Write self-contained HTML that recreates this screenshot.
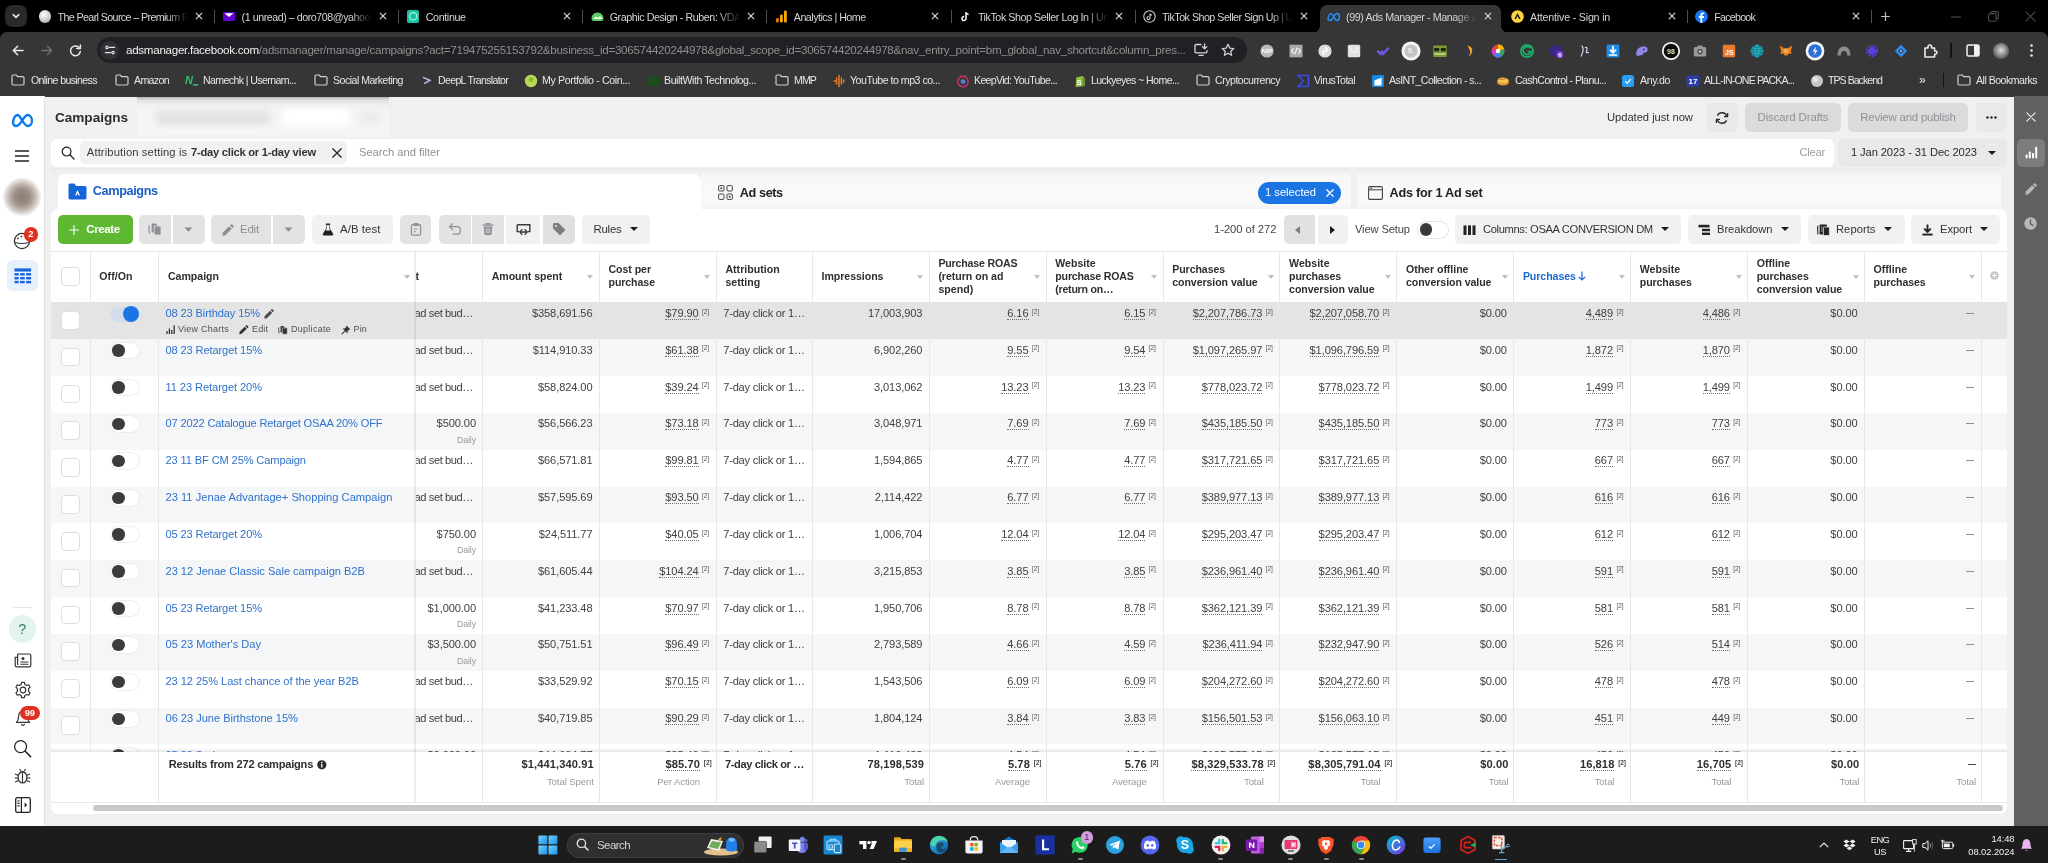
<!DOCTYPE html>
<html lang="en"><head><meta charset="utf-8"><title>Ads Manager</title>
<style>
*{box-sizing:border-box;margin:0;padding:0}
html,body{width:2048px;height:863px;overflow:hidden;background:#f0f0f1}
body{opacity:0.9999;position:relative;font-family:"Liberation Sans",sans-serif;font-size:11.2px;color:#333;-webkit-font-smoothing:antialiased}
.abs{position:absolute}
svg{display:block;overflow:visible}
/* ---------- chrome ---------- */
#tabstrip{position:absolute;left:0;top:0;width:2048px;height:42px;background:#000}
#toolbar{position:absolute;left:0;top:32px;width:2048px;height:64.7px;background:#363637;border-radius:7px 7px 0 0}
.tab{position:absolute;top:0;height:32px;color:#d6d6d6;font-size:10.7px;letter-spacing:-0.1px}
.tab .fav{position:absolute;left:0;top:8px;width:16px;height:16px;border-radius:50%}
.tab .tt{position:absolute;left:13px;top:9.6px;width:130px;height:16px;white-space:nowrap;overflow:hidden;line-height:14px;
 -webkit-mask-image:linear-gradient(90deg,#000 0,#000 108px,transparent 130px);mask-image:linear-gradient(90deg,#000 0,#000 108px,transparent 130px)}
.tab .x{position:absolute;left:149px;top:11px}
.tsep{position:absolute;top:10px;width:1px;height:13px;background:#505050}
#urlpill{position:absolute;left:97px;top:5px;width:1150px;height:26px;border-radius:13px;background:#202124}
.url{position:absolute;left:29px;top:6px;font-size:11.6px;line-height:14px;white-space:nowrap;color:#8f8f8f;letter-spacing:-0.02px}
.url b{font-weight:normal;color:#f0f0f0}
.bm{position:absolute;top:41px;height:14px;line-height:14px;font-size:10.6px;color:#e6e6e6;white-space:nowrap;letter-spacing:-0.2px}
.ext{position:absolute;top:9px;width:17px;height:17px;border-radius:50%}
/* ---------- page ---------- */
#leftnav{position:absolute;left:0;top:96px;width:45px;height:730px;background:#fff;border-right:1px solid #e2e2e3}
#rightbar{position:absolute;left:2013.5px;top:96px;width:34.5px;height:730px;background:#606060}
.btn{position:absolute;height:28.5px;border-radius:5px;background:#e3e3e4;color:#8d8d8f;font-size:11.4px;line-height:28.5px;white-space:nowrap}
.btn.lt{background:#f1f1f2;color:#333}
.card{position:absolute;background:#fff}
/* table */
.hdr{position:absolute;top:250.5px;height:51.3px;font-weight:bold;font-size:10.6px;line-height:12.9px;color:#2f2f2f;letter-spacing:-0.2px;display:flex;align-items:center;padding-left:9.2px;white-space:nowrap}
.hdr .car{position:absolute;right:5.9px;top:24.6px;width:0;height:0;border-left:3.6px solid transparent;border-right:3.6px solid transparent;border-top:4px solid #bdbfc2}
.vline{position:absolute;top:250.5px;width:1px;height:552px;background:#e6e7e9}
.row{position:absolute;left:51px;width:1956px;height:36.8px}
.cell{position:absolute;top:4.5px;height:13px;line-height:13px;white-space:nowrap;font-size:11.1px;letter-spacing:-0.1px;color:#414141}
.cell.r{text-align:right}
.cell.u{}
.u span.v{border-bottom:1px dotted #6f6f6f;padding-bottom:0}
.sup{display:inline-block;font-size:5.5px;letter-spacing:0;vertical-align:top;margin-left:3px;line-height:8px;color:#555;position:relative;top:0px}
.sub{position:absolute;top:22.1px;height:11px;line-height:11px;font-size:8.8px;color:#9a9a9a;white-space:nowrap;text-align:right;letter-spacing:-0.1px}
.name{position:absolute;top:4.5px;left:114.5px;height:13px;line-height:13px;font-size:11.1px;color:#3072cc;white-space:nowrap;letter-spacing:-0.12px}
.chk{position:absolute;left:10.3px;top:8.6px;width:18.6px;height:18.6px;border:1px solid #dcdee1;border-radius:4px;background:#fff}
.tog{position:absolute;left:59.8px;top:3.6px;width:28.2px;height:15.4px;border-radius:8px;background:#fff;box-shadow:0 0 0 0.8px #e6e8ea}
.tog i{position:absolute;left:1.4px;top:1.5px;width:12.4px;height:12.4px;border-radius:50%;background:#3c3c3c}
.foot{position:absolute;font-weight:bold;font-size:11.1px;color:#2f2f2f;white-space:nowrap;text-align:right;height:13px;line-height:13px;top:758px;letter-spacing:0.1px}
.foot2{position:absolute;font-size:9.6px;color:#9a9a9a;white-space:nowrap;text-align:right;height:11px;line-height:11px;top:775.5px;letter-spacing:-0.1px}
/* taskbar */
#taskbar{position:absolute;left:0;top:826px;width:2048px;height:37px;background:#1c1c1c}
.tbi{position:absolute;top:8px;width:20px;height:20px;border-radius:4px}
.supb{position:absolute;top:5.2px;width:7.4px;height:8px;font-size:6.5px;line-height:8px;color:#555;text-align:center;letter-spacing:-0.1px;margin-right:-0.5px}

</style></head>
<body>
<div id="tabstrip">
<div class="abs" style="left:5px;top:5px;width:22px;height:22px;border-radius:7px;background:#2a2a2a"><svg width="22" height="22" viewBox="0 0 22 22"><path d="M8.2 9.6 L11 12.4 L13.8 9.6" fill="none" stroke="#e8e8e8" stroke-width="1.5" stroke-linecap="round" stroke-linejoin="round"/></svg></div>
<div class="abs" style="left:1320px;top:5px;width:181px;height:28px;background:#363637;border-radius:7px 7px 0 0"></div>
<div class="abs" style="left:1313px;top:26px;width:7px;height:7px;background:radial-gradient(circle at 0 0,transparent 6.5px,#363637 7px)"></div>
<div class="abs" style="left:1501px;top:26px;width:7px;height:7px;background:radial-gradient(circle at 100% 0,transparent 6.5px,#363637 7px)"></div>
<div class="tab" style="left:38.5px;width:176px"><div class="abs" style="left:0;top:10px;width:13px;height:13px"><div style="width:12.5px;height:12.5px;border-radius:50%;background:radial-gradient(circle at 40% 35%,#fff 0,#d9d4d0 45%,#9a9490 100%)"></div></div><div class="tt" style="left:19px;letter-spacing:-0.61px">The Pearl Source – Premium P</div><svg class="x" style="left:156.6px;top:12.4px" width="8" height="8" viewBox="0 0 8 8"><path d="M1.2 1.2 L6.8 6.8 M6.8 1.2 L1.2 6.8" stroke="#dcdcdc" stroke-width="1.15" stroke-linecap="round"/></svg></div>
<div class="tsep" style="left:214.2px"></div>
<div class="tab" style="left:222.6px;width:176px"><div class="abs" style="left:0;top:10px;width:13px;height:13px"><div style="width:12px;height:9px;margin-top:2px;background:#6001d2;border-radius:1px;position:relative"><svg width="12" height="9" viewBox="0 0 12 9"><path d="M1.5 1.2 L6 5 L10.5 1.2 Z" fill="#fff"/></svg></div></div><div class="tt" style="left:19px;letter-spacing:-0.46px">(1 unread) – doro708@yahoo.</div><svg class="x" style="left:156.6px;top:12.4px" width="8" height="8" viewBox="0 0 8 8"><path d="M1.2 1.2 L6.8 6.8 M6.8 1.2 L1.2 6.8" stroke="#dcdcdc" stroke-width="1.15" stroke-linecap="round"/></svg></div>
<div class="tsep" style="left:398.3px"></div>
<div class="tab" style="left:406.7px;width:176px"><div class="abs" style="left:0;top:10px;width:13px;height:13px"><div style="width:12.5px;height:12.5px;border-radius:2px;background:#19c3a0"><svg width="12.5" height="12.5" viewBox="0 0 12 12"><circle cx="6" cy="6" r="3.6" fill="none" stroke="#aef0e0" stroke-width="1.2"/></svg></div></div><div class="tt" style="left:19px;letter-spacing:-0.35px">Continue</div><svg class="x" style="left:156.6px;top:12.4px" width="8" height="8" viewBox="0 0 8 8"><path d="M1.2 1.2 L6.8 6.8 M6.8 1.2 L1.2 6.8" stroke="#dcdcdc" stroke-width="1.15" stroke-linecap="round"/></svg></div>
<div class="tsep" style="left:582.4px"></div>
<div class="tab" style="left:590.7px;width:176px"><div class="abs" style="left:0;top:10px;width:13px;height:13px"><svg width="13" height="13" viewBox="0 0 13 13"><path d="M0.5 9 Q0.5 3 6.5 2.5 Q12.5 3 12.5 9 Q12.5 11 10 11 H3 Q0.5 11 0.5 9Z" fill="#5ecc62"/><path d="M2 9 L5 6.5 L7 8 L9 6 L11.5 9 Z" fill="#fff"/></svg></div><div class="tt" style="left:19px;letter-spacing:-0.43px">Graphic Design - Ruben: VDA</div><svg class="x" style="left:156.6px;top:12.4px" width="8" height="8" viewBox="0 0 8 8"><path d="M1.2 1.2 L6.8 6.8 M6.8 1.2 L1.2 6.8" stroke="#dcdcdc" stroke-width="1.15" stroke-linecap="round"/></svg></div>
<div class="tsep" style="left:766.4px"></div>
<div class="tab" style="left:774.8px;width:176px"><div class="abs" style="left:0;top:10px;width:13px;height:13px"><svg width="13" height="13" viewBox="0 0 13 13"><rect x="1" y="8" width="2.8" height="4.5" rx="1.2" fill="#e37400"/><rect x="5" y="4.5" width="2.8" height="8" rx="1.2" fill="#f9ab00"/><rect x="9" y="0.5" width="2.8" height="12" rx="1.2" fill="#f9ab00"/></svg></div><div class="tt" style="left:19px;letter-spacing:-0.51px">Analytics | Home</div><svg class="x" style="left:156.6px;top:12.4px" width="8" height="8" viewBox="0 0 8 8"><path d="M1.2 1.2 L6.8 6.8 M6.8 1.2 L1.2 6.8" stroke="#dcdcdc" stroke-width="1.15" stroke-linecap="round"/></svg></div>
<div class="tsep" style="left:950.5px"></div>
<div class="tab" style="left:958.9px;width:176px"><div class="abs" style="left:0;top:10px;width:13px;height:13px"><svg width="13" height="13" viewBox="0 0 13 13"><path d="M7 2.2 V8.6 A2 2 0 1 1 5.2 6.6 M7 2.2 Q7.4 4.2 9.6 4.5" fill="none" stroke="#fff" stroke-width="1.5"/></svg></div><div class="tt" style="left:19px;letter-spacing:-0.43px">TikTok Shop Seller Log In | Un</div><svg class="x" style="left:156.6px;top:12.4px" width="8" height="8" viewBox="0 0 8 8"><path d="M1.2 1.2 L6.8 6.8 M6.8 1.2 L1.2 6.8" stroke="#dcdcdc" stroke-width="1.15" stroke-linecap="round"/></svg></div>
<div class="tsep" style="left:1134.6px"></div>
<div class="tab" style="left:1143.0px;width:176px"><div class="abs" style="left:0;top:10px;width:13px;height:13px"><svg width="13" height="13" viewBox="0 0 13 13"><circle cx="6.5" cy="6.5" r="5.7" fill="none" stroke="#cfcfcf" stroke-width="1.1"/><path d="M7 3.5 V8 A1.5 1.5 0 1 1 5.6 6.6 M7 3.5 Q7.3 5 9 5.2" fill="none" stroke="#cfcfcf" stroke-width="1.1"/></svg></div><div class="tt" style="left:19px;letter-spacing:-0.51px">TikTok Shop Seller Sign Up | U</div><svg class="x" style="left:156.6px;top:12.4px" width="8" height="8" viewBox="0 0 8 8"><path d="M1.2 1.2 L6.8 6.8 M6.8 1.2 L1.2 6.8" stroke="#dcdcdc" stroke-width="1.15" stroke-linecap="round"/></svg></div>
<div class="tab" style="left:1327.1px;width:176px"><div class="abs" style="left:0;top:10px;width:13px;height:13px"><svg width="13.5" height="12" viewBox="0 0 15 13" style="margin-top:0.5px"><path d="M1.2 9.5 C1.2 5 3 2.6 4.6 2.6 C6.4 2.6 8.6 10.4 10.8 10.4 C12.6 10.4 13.8 8.6 13.8 6.6 C13.8 4.4 12.4 2.6 10.6 2.6 C8.6 2.6 6.2 10.4 3.6 10.4 C2.2 10.4 1.2 9.6 1.2 8.2" fill="none" stroke="#2b8cf5" stroke-width="1.7" stroke-linecap="round"/></svg></div><div class="tt" style="left:19px;letter-spacing:-0.41px">(99) Ads Manager - Manage a</div><svg class="x" style="left:156.6px;top:12.4px" width="8" height="8" viewBox="0 0 8 8"><path d="M1.2 1.2 L6.8 6.8 M6.8 1.2 L1.2 6.8" stroke="#dcdcdc" stroke-width="1.15" stroke-linecap="round"/></svg></div>
<div class="tab" style="left:1511.1px;width:176px"><div class="abs" style="left:0;top:10px;width:13px;height:13px"><svg width="13" height="13" viewBox="0 0 13 13"><circle cx="6.5" cy="6.5" r="6.3" fill="#ffd23f"/><path d="M6.5 3 L9.6 9 H8 L6.5 6 L5 9 H3.4 Z" fill="#1a1a1a"/></svg></div><div class="tt" style="left:19px;letter-spacing:-0.20px">Attentive - Sign in</div><svg class="x" style="left:156.6px;top:12.4px" width="8" height="8" viewBox="0 0 8 8"><path d="M1.2 1.2 L6.8 6.8 M6.8 1.2 L1.2 6.8" stroke="#dcdcdc" stroke-width="1.15" stroke-linecap="round"/></svg></div>
<div class="tsep" style="left:1686.8px"></div>
<div class="tab" style="left:1695.2px;width:176px"><div class="abs" style="left:0;top:10px;width:13px;height:13px"><svg width="13" height="13" viewBox="0 0 13 13"><circle cx="6.5" cy="6.5" r="6.4" fill="#1877f2"/><path d="M7.2 12.8 V8 H8.8 L9.1 6.1 H7.2 V5 Q7.2 4.1 8.2 4.1 H9.2 V2.5 Q8.4 2.4 7.7 2.4 Q5.4 2.4 5.4 4.8 V6.1 H3.8 V8 H5.4 V12.8Z" fill="#fff"/></svg></div><div class="tt" style="left:19px;letter-spacing:-0.75px">Facebook</div><svg class="x" style="left:156.6px;top:12.4px" width="8" height="8" viewBox="0 0 8 8"><path d="M1.2 1.2 L6.8 6.8 M6.8 1.2 L1.2 6.8" stroke="#dcdcdc" stroke-width="1.15" stroke-linecap="round"/></svg></div>
<div class="tsep" style="left:1871px"></div>
<svg class="abs" style="left:1880.5px;top:12px" width="9" height="9" viewBox="0 0 9 9"><path d="M4.5 0.6 V8.4 M0.6 4.5 H8.4" stroke="#c2c2c2" stroke-width="1.2" stroke-linecap="round"/></svg>
<svg class="abs" style="left:1951px;top:16px" width="10" height="2" viewBox="0 0 10 2"><path d="M0 1 H10" stroke="#4c4c4c" stroke-width="1.1"/></svg>
<svg class="abs" style="left:1988px;top:11px" width="11" height="11" viewBox="0 0 11 11"><rect x="0.6" y="2.6" width="7.6" height="7.6" rx="1.5" fill="none" stroke="#4c4c4c" stroke-width="1.1"/><path d="M2.8 2.4 V1.8 Q2.8 0.6 4 0.6 H9 Q10.3 0.6 10.3 1.8 V6.8 Q10.3 8 9.2 8 H8.6" fill="none" stroke="#4c4c4c" stroke-width="1.1"/></svg>
<svg class="abs" style="left:2025px;top:11px" width="11" height="11" viewBox="0 0 11 11"><path d="M0.6 0.6 L10.4 10.4 M10.4 0.6 L0.6 10.4" stroke="#4c4c4c" stroke-width="1.1"/></svg>
</div>
<div id="toolbar">
<svg class="abs" style="left:12px;top:12.5px" width="12" height="11" viewBox="0 0 12 11"><path d="M11 5.5 H1.5 M5.6 1.2 L1.3 5.5 L5.6 9.8" fill="none" stroke="#eaeaea" stroke-width="1.5" stroke-linecap="round" stroke-linejoin="round"/></svg>
<svg class="abs" style="left:40.5px;top:12.5px" width="12" height="11" viewBox="0 0 12 11"><path d="M1 5.5 H10.5 M6.4 1.2 L10.7 5.5 L6.4 9.8" fill="none" stroke="#6e6e6e" stroke-width="1.4" stroke-linecap="round" stroke-linejoin="round"/></svg>
<svg class="abs" style="left:69px;top:11.5px" width="13" height="13" viewBox="0 0 13 13"><path d="M10.6 4.2 A4.9 4.9 0 1 0 11.3 7.4" fill="none" stroke="#eaeaea" stroke-width="1.5" stroke-linecap="round"/><path d="M11.4 1 V4.6 H7.8" fill="none" stroke="#eaeaea" stroke-width="1.5" stroke-linecap="round" stroke-linejoin="round"/></svg>
<div id="urlpill"><div class="abs" style="left:3px;top:3.5px;width:19px;height:19px;border-radius:50%;background:#2f3033"></div><svg class="abs" style="left:7.5px;top:8px" width="10" height="10" viewBox="0 0 10 10"><circle cx="2" cy="2.4" r="1.25" fill="none" stroke="#e8e8e8" stroke-width="1.1"/><path d="M4.6 2.4 H9.6" stroke="#e8e8e8" stroke-width="1.2" stroke-linecap="round"/><circle cx="8" cy="7.6" r="1.25" fill="none" stroke="#e8e8e8" stroke-width="1.1"/><path d="M0.4 7.6 H5.4" stroke="#e8e8e8" stroke-width="1.2" stroke-linecap="round"/></svg><div class="url" style="letter-spacing:-0.280px"><b>adsmanager.facebook.com</b>/adsmanager/manage/campaigns?act=719475255153792&amp;business_id=306574420244978&amp;global_scope_id=306574420244978&amp;nav_entry_point=bm_global_nav_shortcut&amp;column_pres...</div><svg class="abs" style="left:1097px;top:6px" width="15" height="14" viewBox="0 0 15 14"><path d="M7 1.5 H2.2 Q1 1.5 1 2.7 V8.6 Q1 9.8 2.2 9.8 H11.8 Q13 9.8 13 8.6 V7.6 M5 12.3 H9.2" fill="none" stroke="#d6d6d6" stroke-width="1.3" stroke-linecap="round"/><path d="M10.6 0.8 V5.6 M8.4 3.6 L10.6 5.8 L12.8 3.6" fill="none" stroke="#d6d6d6" stroke-width="1.3" stroke-linecap="round" stroke-linejoin="round"/></svg><svg class="abs" style="left:1124px;top:5.5px" width="14" height="14" viewBox="0 0 14 14"><path d="M7 1.3 L8.7 5.1 L12.8 5.5 L9.7 8.2 L10.6 12.3 L7 10.2 L3.4 12.3 L4.3 8.2 L1.2 5.5 L5.3 5.1 Z" fill="none" stroke="#d6d6d6" stroke-width="1.25" stroke-linejoin="round"/></svg></div>
<svg class="abs" style="left:1259.0px;top:10.6px" width="16" height="16" viewBox="0 0 16 16"><circle cx="8" cy="8" r="6.6" fill="#b9b9b9"/><text x="8" y="10.2" font-size="5.4" font-weight="bold" text-anchor="middle" fill="#fff" font-family="Liberation Sans">ABP</text></svg>
<svg class="abs" style="left:1288.0px;top:10.6px" width="16" height="16" viewBox="0 0 16 16"><rect x="1.5" y="1.7" width="13" height="12.6" fill="#a9a9a9"/><path d="M5.6 5.4 L3.6 8 L5.6 10.6 M10.4 5.4 L12.4 8 L10.4 10.6 M9 4.6 L7 11.4" stroke="#fff" stroke-width="1.1" fill="none"/></svg>
<svg class="abs" style="left:1317.0px;top:10.6px" width="16" height="16" viewBox="0 0 16 16"><circle cx="8" cy="8" r="6.6" fill="#dcdcdc"/><path d="M8 5 A2 2 0 1 1 8 9 M8 11.5 A2 2 0 1 1 8 7.5" fill="none" stroke="#fff" stroke-width="1.4"/></svg>
<svg class="abs" style="left:1346.0px;top:10.6px" width="16" height="16" viewBox="0 0 16 16"><rect x="1.8" y="1.8" width="12.4" height="12.4" rx="1.5" fill="#e2e2e2"/><path d="M5 4 V8 Q8 10.5 11 8 V4" fill="none" stroke="#f4f4f4" stroke-width="1.2"/></svg>
<svg class="abs" style="left:1375.0px;top:10.6px" width="16" height="16" viewBox="0 0 16 16"><path d="M2.5 7.6 L5.2 10.6 L8 8 M6.4 9.5 L8 11 L13.8 4.8" fill="none" stroke="#6b57e0" stroke-width="2.6" stroke-linejoin="miter"/></svg>
<svg class="abs" style="left:1403.0px;top:10.6px" width="16" height="16" viewBox="0 0 16 16"><circle cx="8" cy="8" r="9.6" fill="#f4f4f4"/><circle cx="8" cy="8" r="6.6" fill="#c4c4c4"/><text x="8" y="10.4" font-size="7" text-anchor="middle" fill="#fff" font-family="Liberation Sans">fL</text></svg>
<svg class="abs" style="left:1432.0px;top:10.6px" width="16" height="16" viewBox="0 0 16 16"><rect x="1.2" y="2.4" width="13.6" height="11.6" rx="1" fill="#7a9a35"/><rect x="2.2" y="5" width="5" height="3.2" rx="0.6" fill="#1f2a10"/><rect x="8.8" y="5" width="5" height="3.2" rx="0.6" fill="#1f2a10"/><rect x="2.4" y="10.2" width="11.2" height="1.6" fill="#c7d98a"/></svg>
<svg class="abs" style="left:1461.0px;top:10.6px" width="16" height="16" viewBox="0 0 16 16"><path d="M6.6 2.2 Q12.6 4 11 9.6 Q9.8 13 7.6 13.6 Q10 10 8.6 7 Q7.6 5 6.6 2.2Z" fill="#f29d2c"/><path d="M5.6 6.6 Q8.8 9 6.6 13.4 Q3.4 10.8 5.6 6.6Z" fill="#2a3a63"/></svg>
<svg class="abs" style="left:1490.0px;top:10.6px" width="16" height="16" viewBox="0 0 16 16"><circle cx="8" cy="8" r="6.4" fill="#ea4335"/><path d="M8 8 L8 1.6 A6.4 6.4 0 0 1 14.1 6Z" fill="#fbbc05"/><path d="M8 8 L14.1 6 A6.4 6.4 0 0 1 11.8 13.2Z" fill="#34a853"/><path d="M8 8 L11.8 13.2 A6.4 6.4 0 0 1 3.6 12.6Z" fill="#4285f4"/><path d="M8 8 L3.6 12.6 A6.4 6.4 0 0 1 1.8 6.4Z" fill="#c83fd8"/><circle cx="8" cy="8" r="2.2" fill="#fff"/></svg>
<svg class="abs" style="left:1519.0px;top:10.6px" width="16" height="16" viewBox="0 0 16 16"><circle cx="8" cy="8" r="6.1" fill="none" stroke="#19b36b" stroke-width="1.7"/><path d="M11.4 5.2 A4 4 0 1 0 12 8.6 H8.4" fill="none" stroke="#19b36b" stroke-width="1.7"/></svg>
<svg class="abs" style="left:1548.0px;top:10.6px" width="16" height="16" viewBox="0 0 16 16"><path d="M8 1.4 L14.4 5 V11 L8 14.6 L1.6 11 V5 Z" fill="#3a2785"/><circle cx="11.8" cy="11.6" r="3.6" fill="#7a3fd0"/><text x="11.8" y="13.8" font-size="6" font-weight="bold" text-anchor="middle" fill="#fff" font-family="Liberation Sans">6</text></svg>
<svg class="abs" style="left:1577.0px;top:10.6px" width="16" height="16" viewBox="0 0 16 16"><path d="M5 3 Q7.6 6 4.2 13 M8.4 4.4 Q11 4 9.6 7.4 Q8.4 10.6 11.4 9.4" fill="none" stroke="#d9d4f2" stroke-width="1.2" stroke-linecap="round"/></svg>
<svg class="abs" style="left:1605.0px;top:10.6px" width="16" height="16" viewBox="0 0 16 16"><rect x="1.6" y="1.6" width="12.8" height="12.8" rx="1.3" fill="#1e8be6"/><path d="M8 3.4 V9.4 M5.4 7.2 L8 9.8 L10.6 7.2 M4.6 12 H11.4" fill="none" stroke="#fff" stroke-width="1.7" stroke-linecap="round" stroke-linejoin="round"/></svg>
<svg class="abs" style="left:1634.0px;top:10.6px" width="16" height="16" viewBox="0 0 16 16"><path d="M2 11.6 Q2 4.4 8.4 3.4 Q14.2 3 13.6 7.4 Q13 10 9.6 9.6 Q9.4 12.6 6.2 12.2 Q3.4 14 2 11.6Z" fill="#8e86e8"/><circle cx="9.8" cy="6.4" r="0.9" fill="#363637"/></svg>
<svg class="abs" style="left:1663.0px;top:10.6px" width="16" height="16" viewBox="0 0 16 16"><circle cx="8" cy="8" r="8.2" fill="#0a0a0a" stroke="#f4f4f4" stroke-width="1.8"/><text x="8" y="10.5" font-size="7" font-weight="bold" text-anchor="middle" fill="#e8e3b0" font-family="Liberation Sans">98</text></svg>
<svg class="abs" style="left:1692.0px;top:10.6px" width="16" height="16" viewBox="0 0 16 16"><rect x="1.8" y="4" width="12.4" height="9.4" rx="1.6" fill="#9a9a9a"/><rect x="5.4" y="2.4" width="5.2" height="2.4" rx="0.8" fill="#9a9a9a"/><circle cx="8" cy="8.6" r="2.6" fill="#363637"/><circle cx="8" cy="8.6" r="1.5" fill="#bdbdbd"/></svg>
<svg class="abs" style="left:1721.0px;top:10.6px" width="16" height="16" viewBox="0 0 16 16"><rect x="1.8" y="1.8" width="12.4" height="12.4" rx="1.2" fill="#ec7a2c"/><text x="8.4" y="12.2" font-size="7" font-weight="bold" text-anchor="middle" fill="#fff" font-family="Liberation Sans">JS</text></svg>
<svg class="abs" style="left:1749.0px;top:10.6px" width="16" height="16" viewBox="0 0 16 16"><circle cx="8" cy="8" r="6.4" fill="#127f8a"/><path d="M1.6 8 H14.4 M8 1.6 Q4 8 8 14.4 M8 1.6 Q12 8 8 14.4 M2.6 4.8 Q8 6.8 13.4 4.8 M2.6 11.2 Q8 9.2 13.4 11.2" fill="none" stroke="#2fb6c4" stroke-width="0.9"/></svg>
<svg class="abs" style="left:1778.0px;top:10.6px" width="16" height="16" viewBox="0 0 16 16"><path d="M1.8 2.4 L6.4 5.6 H9.6 L14.2 2.4 L12.8 8 L13.6 11 L10.4 10.4 L9.4 12.4 H6.6 L5.6 10.4 L2.4 11 L3.2 8 Z" fill="#e8821e"/><path d="M6.4 5.6 L5.6 10.4 L8 9.4 L10.4 10.4 L9.6 5.6Z" fill="#f5a85a"/></svg>
<svg class="abs" style="left:1807.0px;top:10.6px" width="16" height="16" viewBox="0 0 16 16"><circle cx="8" cy="8" r="9.4" fill="#f4f4f4"/><circle cx="8" cy="8" r="6.8" fill="#2a6fd6"/><path d="M9 3.6 L5.6 8.6 H8 L7 12.4 L10.6 7.2 H8.2Z" fill="#fff"/></svg>
<svg class="abs" style="left:1836.0px;top:10.6px" width="16" height="16" viewBox="0 0 16 16"><path d="M1.6 12.6 Q1.6 3.4 8 3.4 Q14.4 3.4 14.4 12.6 H11.2 Q11.2 8 8 8 Q4.8 8 4.8 12.6Z" fill="#8c8c8c"/></svg>
<svg class="abs" style="left:1864.0px;top:10.6px" width="16" height="16" viewBox="0 0 16 16"><circle cx="8" cy="8" r="4.6" fill="none" stroke="#5a3fe0" stroke-width="3.2" stroke-dasharray="1.6 1.3"/><circle cx="8" cy="8" r="3.6" fill="#5a3fe0"/></svg>
<svg class="abs" style="left:1893.0px;top:10.6px" width="16" height="16" viewBox="0 0 16 16"><path d="M8 1.8 L14.2 8 L8 14.2 L1.8 8Z" fill="#2d8cf0"/><path d="M8 5.2 L10.8 8 L8 10.8 L5.2 8Z" fill="#363637"/><path d="M8 6.6 L9.4 8 L8 9.4 L6.6 8Z" fill="#7cc0ff"/></svg>
<svg class="abs" style="left:1922.0px;top:10.6px" width="16" height="16" viewBox="0 0 16 16"><path d="M3 5 H6 V4 Q6 2 7.8 2 Q9.6 2 9.6 4 V5 H12.6 V8 H13.4 Q15 8 15 9.6 Q15 11.2 13.4 11.2 H12.6 V14 H3 Z" fill="none" stroke="#ececec" stroke-width="1.6" stroke-linejoin="round"/></svg>
<div class="abs" style="left:1950.3px;top:10.5px;width:1.6px;height:15px;background:#141414"></div>
<svg class="abs" style="left:1966px;top:11.5px" width="14" height="13" viewBox="0 0 14 13"><rect x="1" y="1" width="12" height="11" rx="1.6" fill="none" stroke="#f2f2f2" stroke-width="1.5"/><rect x="8" y="1" width="5" height="11" fill="#f2f2f2"/></svg>
<div class="abs" style="left:1993.2px;top:11.2px;width:15.6px;height:15.6px;border-radius:50%;background:radial-gradient(circle at 50% 45%,#dcdcdc 0,#a8a8a8 30%,#6a6a6a 62%,#3c3c3c 100%)"></div>
<svg class="abs" style="left:2029.5px;top:11.5px" width="3" height="13" viewBox="0 0 3 13"><circle cx="1.5" cy="1.6" r="1.25" fill="#ececec"/><circle cx="1.5" cy="6.5" r="1.25" fill="#ececec"/><circle cx="1.5" cy="11.4" r="1.25" fill="#ececec"/></svg>
<div class="abs" style="left:11px;top:41.5px"><svg width="14" height="12" viewBox="0 0 14 12"><path d="M1 2.2 Q1 1 2.2 1 H5.2 L6.6 2.6 H11.8 Q13 2.6 13 3.8 V9.8 Q13 11 11.8 11 H2.2 Q1 11 1 9.8Z" fill="none" stroke="#d0d0d0" stroke-width="1.2" stroke-linejoin="round"/></svg></div><div class="bm" style="left:31px;letter-spacing:-0.63px">Online business</div>
<div class="abs" style="left:115px;top:41.5px"><svg width="14" height="12" viewBox="0 0 14 12"><path d="M1 2.2 Q1 1 2.2 1 H5.2 L6.6 2.6 H11.8 Q13 2.6 13 3.8 V9.8 Q13 11 11.8 11 H2.2 Q1 11 1 9.8Z" fill="none" stroke="#d0d0d0" stroke-width="1.2" stroke-linejoin="round"/></svg></div><div class="bm" style="left:134px;letter-spacing:-0.65px">Amazon</div>
<div class="abs" style="left:185px;top:41.5px"><svg width="14" height="14" viewBox="0 0 14 14"><text x="0" y="10" font-size="11" font-weight="bold" font-style="italic" fill="#2fbf71" font-family="Liberation Sans">N</text><rect x="8" y="10" width="5" height="1.6" fill="#2fbf71"/></svg></div><div class="bm" style="left:203px;letter-spacing:-0.61px">Namechk | Usernam...</div>
<div class="abs" style="left:314px;top:41.5px"><svg width="14" height="12" viewBox="0 0 14 12"><path d="M1 2.2 Q1 1 2.2 1 H5.2 L6.6 2.6 H11.8 Q13 2.6 13 3.8 V9.8 Q13 11 11.8 11 H2.2 Q1 11 1 9.8Z" fill="none" stroke="#d0d0d0" stroke-width="1.2" stroke-linejoin="round"/></svg></div><div class="bm" style="left:333px;letter-spacing:-0.52px">Social Marketing</div>
<div class="abs" style="left:420px;top:41.5px"><svg width="14" height="14" viewBox="0 0 14 14"><path d="M3 3.4 L10 6.4 L4 9.6" fill="none" stroke="#b9c6e6" stroke-width="1.4"/></svg></div><div class="bm" style="left:438px;letter-spacing:-0.68px">DeepL Translator</div>
<div class="abs" style="left:524px;top:41.5px"><svg width="14" height="14" viewBox="0 0 14 14"><circle cx="7" cy="7" r="6.2" fill="#b6d957"/><circle cx="7" cy="5.6" r="2.4" fill="#8fb82e"/></svg></div><div class="bm" style="left:542px;letter-spacing:-0.36px">My Portfolio - Coin...</div>
<div class="abs" style="left:646px;top:41.5px"><svg width="14" height="14" viewBox="0 0 14 14"><rect x="1" y="2.4" width="12" height="9.6" rx="1" fill="#1d4d1d"/></svg></div><div class="bm" style="left:664px;letter-spacing:-0.44px">BuiltWith Technolog...</div>
<div class="abs" style="left:775px;top:41.5px"><svg width="14" height="12" viewBox="0 0 14 12"><path d="M1 2.2 Q1 1 2.2 1 H5.2 L6.6 2.6 H11.8 Q13 2.6 13 3.8 V9.8 Q13 11 11.8 11 H2.2 Q1 11 1 9.8Z" fill="none" stroke="#d0d0d0" stroke-width="1.2" stroke-linejoin="round"/></svg></div><div class="bm" style="left:794px;letter-spacing:-0.91px">MMP</div>
<div class="abs" style="left:832px;top:41.5px"><svg width="14" height="14" viewBox="0 0 14 14"><path d="M2 7 H3.4 M4.6 4 V10 M7 1.6 V12.4 M9.4 4 V10 M11.6 6 V8" stroke="#f0782a" stroke-width="1.5" stroke-linecap="round"/></svg></div><div class="bm" style="left:850px;letter-spacing:-0.50px">YouTube to mp3 co...</div>
<div class="abs" style="left:956px;top:41.5px"><svg width="14" height="14" viewBox="0 0 14 14"><circle cx="7" cy="7.6" r="5.2" fill="none" stroke="#d6336c" stroke-width="1.3"/><circle cx="7" cy="7.6" r="2.4" fill="#5a7fd6"/><path d="M4.4 1.4 L6 3 M9.6 1.4 L8 3" stroke="#d6336c" stroke-width="1.1"/></svg></div><div class="bm" style="left:974px;letter-spacing:-0.69px">KeepVid: YouTube...</div>
<div class="abs" style="left:1073px;top:41.5px"><svg width="14" height="14" viewBox="0 0 14 14"><path d="M3.2 3.6 L9.6 2 L11.6 4 L12 12 L2.6 13Z" fill="#95bf47"/><path d="M9.6 2 L11.6 4 L12 12 L9.4 12.6Z" fill="#5e8e3e"/><text x="6.2" y="10.6" font-size="7" font-weight="bold" text-anchor="middle" fill="#fff" font-family="Liberation Sans">S</text></svg></div><div class="bm" style="left:1091px;letter-spacing:-0.59px">Luckyeyes ~ Home...</div>
<div class="abs" style="left:1196px;top:41.5px"><svg width="14" height="12" viewBox="0 0 14 12"><path d="M1 2.2 Q1 1 2.2 1 H5.2 L6.6 2.6 H11.8 Q13 2.6 13 3.8 V9.8 Q13 11 11.8 11 H2.2 Q1 11 1 9.8Z" fill="none" stroke="#d0d0d0" stroke-width="1.2" stroke-linejoin="round"/></svg></div><div class="bm" style="left:1215px;letter-spacing:-0.49px">Cryptocurrency</div>
<div class="abs" style="left:1296px;top:41.5px"><svg width="14" height="14" viewBox="0 0 14 14"><path d="M2 1.6 H12.4 V12.4 H2 L7.4 7 Z" fill="none" stroke="#3b4ee0" stroke-width="1.5" stroke-linejoin="miter"/></svg></div><div class="bm" style="left:1314px;letter-spacing:-0.53px">VirusTotal</div>
<div class="abs" style="left:1371px;top:41.5px"><svg width="14" height="14" viewBox="0 0 14 14"><rect x="1" y="1" width="12" height="12" rx="1" fill="#1787e0"/><path d="M3.4 6.4 L10.6 3.6 V11.4 H3.4Z" fill="#fff"/></svg></div><div class="bm" style="left:1389px;letter-spacing:-0.58px">AsINT_Collection - s...</div>
<div class="abs" style="left:1496px;top:41.5px"><svg width="14" height="14" viewBox="0 0 14 14"><ellipse cx="7" cy="8" rx="6" ry="3.6" fill="#e89a2c"/><ellipse cx="7" cy="6.2" rx="5.4" ry="2.8" fill="#f6c35a"/><path d="M3 5.6 L10.6 4.6" stroke="#b86a10" stroke-width="0.9"/></svg></div><div class="bm" style="left:1515px;letter-spacing:-0.60px">CashControl - Planu...</div>
<div class="abs" style="left:1621px;top:41.5px"><svg width="14" height="14" viewBox="0 0 14 14"><rect x="1" y="1" width="12" height="12" rx="2.6" fill="#2a9df4"/><path d="M4.2 7.4 L6.2 9.4 L9.8 5.2" fill="none" stroke="#fff" stroke-width="1.3"/></svg></div><div class="bm" style="left:1640px;letter-spacing:-0.37px">Any.do</div>
<div class="abs" style="left:1686px;top:41.5px"><svg width="14" height="14" viewBox="0 0 14 14"><rect x="0.6" y="1.4" width="12.8" height="11.2" rx="1" fill="#2b3ea8"/><text x="7" y="10.4" font-size="8" font-weight="bold" text-anchor="middle" fill="#fff" font-family="Liberation Sans">17</text></svg></div><div class="bm" style="left:1704px;letter-spacing:-0.86px">ALL-IN-ONE PACKA...</div>
<div class="abs" style="left:1810px;top:41.5px"><svg width="14" height="14" viewBox="0 0 14 14"><circle cx="7" cy="7" r="6" fill="#c9c6c6"/><circle cx="5.4" cy="5.4" r="2.6" fill="#e6e2e2"/></svg></div><div class="bm" style="left:1828px;letter-spacing:-0.98px">TPS Backend</div>
<div class="abs" style="left:1957px;top:41.5px"><svg width="14" height="12" viewBox="0 0 14 12"><path d="M1 2.2 Q1 1 2.2 1 H5.2 L6.6 2.6 H11.8 Q13 2.6 13 3.8 V9.8 Q13 11 11.8 11 H2.2 Q1 11 1 9.8Z" fill="none" stroke="#d0d0d0" stroke-width="1.2" stroke-linejoin="round"/></svg></div><div class="bm" style="left:1976px;letter-spacing:-0.52px">All Bookmarks</div>
<div class="bm" style="left:1919px;top:40.5px;font-size:12px;letter-spacing:-1px">»</div>
<div class="abs" style="left:1942.6px;top:40.5px;width:1.6px;height:14px;background:#141414"></div>
</div>
<div id="leftnav">
<svg class="abs" style="left:11px;top:17px" width="23" height="15" viewBox="0 0 23 15"><path d="M2 10.2 C2 5.6 4.2 2 6.6 2 C9.6 2 12.6 13 16.6 13 C19.4 13 21 10.6 21 7.8 C21 4.6 19 2 16.4 2 C13 2 9.6 13 5.4 13 C3.2 13 2 11.6 2 9.8" fill="none" stroke="#0a78f0" stroke-width="2.3" stroke-linecap="round"/></svg>
<svg class="abs" style="left:15.2px;top:54px" width="14" height="12" viewBox="0 0 15 12" preserveAspectRatio="none"><path d="M0.5 1 H14.5 M0.5 6 H14.5 M0.5 11 H14.5" stroke="#222" stroke-width="1.5" stroke-linecap="round"/></svg>
<div class="abs" style="left:3px;top:82px;width:38px;height:38px;border-radius:50%;background:radial-gradient(circle,#8d7d74 0,#9b8d85 28%,#c4bab4 50%,#ebe7e4 66%,rgba(255,255,255,0) 80%)"></div>
<svg class="abs" style="left:12.5px;top:136px" width="18" height="18" viewBox="0 0 18 18"><circle cx="9" cy="9" r="7.6" fill="none" stroke="#333" stroke-width="1.3"/><path d="M2 10.4 Q9 12.6 16 10.4" fill="none" stroke="#333" stroke-width="1.1"/><circle cx="5" cy="6.4" r="0.9" fill="#333"/><circle cx="8.4" cy="4.6" r="0.9" fill="#333"/></svg>
<div class="abs" style="left:23.5px;top:131px;width:14.5px;height:14.5px;border-radius:50%;background:#e0301e;color:#fff;font-size:9.4px;font-weight:bold;text-align:center;line-height:14.5px">2</div>
<div class="abs" style="left:7px;top:164px;width:30.5px;height:30.5px;border-radius:6px;background:#e7f0fd"></div>
<svg class="abs" style="left:13.6px;top:170.5px" width="17.6" height="17.6" viewBox="0 0 19 19"><rect x="0.5" y="1.5" width="18" height="3.4" fill="#1767d9"/><g fill="#1767d9"><rect x="0.5" y="6.6" width="4.6" height="2.6"/><rect x="6.6" y="6.6" width="5" height="2.6"/><rect x="13.1" y="6.6" width="5.4" height="2.6"/><rect x="0.5" y="10.8" width="4.6" height="2.6"/><rect x="6.6" y="10.8" width="5" height="2.6"/><rect x="13.1" y="10.8" width="5.4" height="2.6"/><rect x="0.5" y="15" width="4.6" height="2.6"/><rect x="6.6" y="15" width="5" height="2.6"/><rect x="13.1" y="15" width="5.4" height="2.6"/></g></svg>
<div class="abs" style="left:13px;top:511px;width:19px;height:1px;background:#e3e5e8"></div>
<div class="abs" style="left:8.5px;top:519px;width:27.5px;height:27.5px;border-radius:50%;background:#e3f4ee"></div>
<div class="abs" style="left:8.5px;top:524.5px;width:27.5px;text-align:center;font-size:14.5px;line-height:16px;color:#3f7a70">?</div>
<svg class="abs" style="left:13.5px;top:556.5px" width="18" height="15" viewBox="0 0 18 15"><path d="M3.6 1 H15.4 Q16.8 1 16.8 2.4 V12.2 Q16.8 13.8 15.2 13.8 H3 Q1.2 13.8 1.2 12 V4.4 H3.6" fill="none" stroke="#333" stroke-width="1.2"/><path d="M3.6 1 V12" stroke="#333" stroke-width="1.2"/><circle cx="9" cy="5.4" r="1.5" fill="#333"/><path d="M6.4 9 H14.4 M6.4 11.2 H14.4" stroke="#333" stroke-width="1.1"/></svg>
<svg class="abs" style="left:13.5px;top:585px" width="18" height="18" viewBox="0 0 18 18"><circle cx="9" cy="9" r="2.8" fill="none" stroke="#333" stroke-width="1.2"/><path d="M7.6 1.4 H10.4 L10.9 3.5 L12.7 4.5 L14.7 3.8 L16.1 6.2 L14.6 7.7 V10.3 L16.1 11.8 L14.7 14.2 L12.7 13.5 L10.9 14.5 L10.4 16.6 H7.6 L7.1 14.5 L5.3 13.5 L3.3 14.2 L1.9 11.8 L3.4 10.3 V7.7 L1.9 6.2 L3.3 3.8 L5.3 4.5 L7.1 3.5 Z" fill="none" stroke="#333" stroke-width="1.2" stroke-linejoin="round"/></svg>
<svg class="abs" style="left:14.5px;top:613px" width="16" height="18" viewBox="0 0 16 18"><path d="M8 2 Q3.6 2.4 3.6 7.4 Q3.6 11.4 1.4 13.4 H14.6 Q12.4 11.4 12.4 7.4 Q12.4 2.4 8 2Z" fill="none" stroke="#333" stroke-width="1.2" stroke-linejoin="round"/><path d="M6.2 15.2 Q8 17.4 9.8 15.2" fill="none" stroke="#333" stroke-width="1.2"/></svg>
<div class="abs" style="left:19.5px;top:609.5px;width:20.5px;height:14.5px;border-radius:7.5px;background:#e0301e;color:#fff;font-size:9.4px;font-weight:bold;text-align:center;line-height:14.5px;letter-spacing:-0.2px">99</div>
<svg class="abs" style="left:13px;top:642.5px" width="19" height="19" viewBox="0 0 19 19"><circle cx="7.6" cy="7.6" r="6" fill="none" stroke="#222" stroke-width="1.3"/><path d="M12 12 L17.6 17.6" stroke="#222" stroke-width="1.5" stroke-linecap="round"/></svg>
<svg class="abs" style="left:14px;top:671px" width="17" height="18" viewBox="0 0 17 18"><ellipse cx="8.5" cy="10.4" rx="4.4" ry="5.6" fill="none" stroke="#333" stroke-width="1.2"/><path d="M5.2 6.6 Q8.5 2.4 11.8 6.6 M8.5 5 V16 M5.6 2 L6.8 4 M11.4 2 L10.2 4 M1 7 L4.4 8.4 M0.6 11 H4.2 M1 15 L4.6 13.4 M16 7 L12.6 8.4 M16.4 11 H12.8 M16 15 L12.4 13.4" fill="none" stroke="#333" stroke-width="1.1"/></svg>
<svg class="abs" style="left:14.5px;top:701px" width="16" height="16" viewBox="0 0 16 16"><rect x="0.7" y="0.7" width="14.6" height="14.6" rx="1.6" fill="none" stroke="#222" stroke-width="1.3"/><path d="M6.4 0.7 V15.3 M2.4 4 H4.6 M2.4 6.4 H4.6 M2.4 8.8 H4.6" stroke="#222" stroke-width="1.2"/><path d="M9.6 5.6 L12.2 8 L9.6 10.4Z" fill="#222"/></svg>
</div>
<div class="abs" style="left:137px;top:96.5px;width:251.5px;height:41px;background:linear-gradient(180deg,#b4b4b4 0,#dedede 3px,#eeeeee 7px,#f4f4f4 12px,#f6f6f6 34px,#f3f3f3 41px)"></div>
<div class="abs" style="left:156px;top:111px;width:114px;height:14px;background:#e2e2e2;filter:blur(3.5px)"></div>
<div class="abs" style="left:283px;top:109px;width:66px;height:17px;background:#ffffff;filter:blur(3px)"></div>
<div class="abs" style="left:359px;top:111px;width:20px;height:14px;background:#ebebeb;filter:blur(3px)"></div>
<div class="abs" style="left:55.0px;top:110.4px;font-size:13.60px;line-height:16.3px;color:#2c2c2c;font-weight:bold;white-space:nowrap;letter-spacing:-0.034px;">Campaigns</div>
<div class="abs" style="left:1607.0px;top:110.9px;font-size:11.20px;line-height:13.4px;color:#333;white-space:nowrap;letter-spacing:-0.034px;">Updated just now</div>
<div class="btn lt" style="left:1706px;top:103px;width:32px;background:#e9e9ea"><svg class="abs" style="left:9px;top:7.5px" width="14" height="14" viewBox="0 0 14 14"><path d="M11.8 5.2 A5.1 5.1 0 0 0 2.4 4.6 M2.2 8.8 A5.1 5.1 0 0 0 11.6 9.4" fill="none" stroke="#2c2c2c" stroke-width="1.3"/><path d="M12.6 2 V5.6 H9 M1.4 12 V8.4 H5" fill="none" stroke="#2c2c2c" stroke-width="1.3" stroke-linejoin="round"/></svg></div>
<div class="btn" style="left:1745px;top:103px;width:96px;background:#dbdbdc;color:#8d9095;text-align:center;letter-spacing:-0.09px">Discard Drafts</div>
<div class="btn" style="left:1848px;top:103px;width:120px;background:#dbdbdc;color:#8d9095;text-align:center;letter-spacing:-0.19px">Review and publish</div>
<div class="btn lt" style="left:1976px;top:103px;width:30.5px;background:#e9e9ea"><svg class="abs" style="left:10px;top:13px" width="11" height="3" viewBox="0 0 11 3"><circle cx="1.5" cy="1.5" r="1.2" fill="#222"/><circle cx="5.5" cy="1.5" r="1.2" fill="#222"/><circle cx="9.5" cy="1.5" r="1.2" fill="#222"/></svg></div>
<div class="card" style="left:51px;top:139px;width:1782.5px;height:28px;border-radius:6px"></div>
<svg class="abs" style="left:60.5px;top:145.5px" width="14" height="14" viewBox="0 0 14 14"><circle cx="5.6" cy="5.6" r="4.4" fill="none" stroke="#222" stroke-width="1.2"/><path d="M8.8 8.8 L13 13" stroke="#222" stroke-width="1.3" stroke-linecap="round"/></svg>
<div class="abs" style="left:80px;top:141.3px;width:267px;height:23px;border-radius:5px;background:#f1f1f2"></div>
<div class="abs" style="left:86.8px;top:144.6px;font-size:11.2px;line-height:14px;color:#3a3a3a;white-space:nowrap;letter-spacing:0.130px">Attribution setting is</div>
<div class="abs" style="left:191px;top:144.6px;font-size:11.2px;line-height:14px;color:#333;font-weight:bold;white-space:nowrap;letter-spacing:-0.254px">7-day click or 1-day view</div>
<svg class="abs" style="left:331.5px;top:147.5px" width="10" height="10" viewBox="0 0 10 10"><path d="M0.8 0.8 L9.2 9.2 M9.2 0.8 L0.8 9.2" stroke="#222" stroke-width="1.25" stroke-linecap="round"/></svg>
<div class="abs" style="left:359.0px;top:146.1px;font-size:11.20px;line-height:13.4px;color:#8d9095;white-space:nowrap;letter-spacing:-0.033px;">Search and filter</div>
<div class="abs" style="left:1799.5px;top:146.1px;font-size:11.20px;line-height:13.4px;color:#9a9da1;white-space:nowrap;letter-spacing:-0.253px;">Clear</div>
<div class="btn lt" style="left:1838px;top:139px;width:168.5px;height:28px;background:#e9e9ea"></div>
<div class="abs" style="left:1851.0px;top:146.0px;font-size:11.20px;line-height:13.4px;color:#2c2c2c;white-space:nowrap;letter-spacing:-0.121px;">1 Jan 2023 - 31 Dec 2023</div>
<div class="abs" style="left:1988px;top:150.5px;width:0;height:0;border-left:4.2px solid transparent;border-right:4.2px solid transparent;border-top:4.6px solid #1c1c1c"></div>
<div class="abs" style="left:51px;top:167.5px;width:650px;height:8px;background:linear-gradient(180deg,#e9e9e9 0,#eeeeee 2.5px,#f0f0f1 6px)"></div>
<div class="card" style="left:57.5px;top:174px;width:643.5px;height:40px;border-radius:7px 7px 0 0"></div>
<div class="card" style="left:701px;top:167.5px;width:650px;height:41px;border-radius:0 5px 0 0;background:linear-gradient(180deg,#e9e9e9 0,#eeeeee 2px,#f3f3f3 5px,#f8f8f8 9.5px,#f9f9f9 37px,#f2f2f2 41px)"></div>
<div class="card" style="left:1357px;top:167.5px;width:644px;height:41.5px;border-radius:5px 5px 0 0;background:linear-gradient(180deg,#e9e9e9 0,#eeeeee 2px,#f3f3f3 5px,#f8f8f8 9.5px,#f9f9f9 37px,#f2f2f2 41px)"></div>
<svg class="abs" style="left:67.5px;top:182.5px" width="19" height="17" viewBox="0 0 19 17"><path d="M0.5 2.2 Q0.5 0.6 2 0.6 H5.6 Q6.6 0.6 7.2 1.6 L8 3 H17 Q18.5 3 18.5 4.6 V14.8 Q18.5 16.4 17 16.4 H2 Q0.5 16.4 0.5 14.8Z" fill="#1565d8"/><path d="M9.5 7 L12 12.4 H10.6 L9.5 10.2 L8.4 12.4 H7Z" fill="#fff"/></svg>
<div class="abs" style="left:92.8px;top:184.2px;font-size:12.70px;line-height:15.2px;color:#1a5fc8;font-weight:bold;white-space:nowrap;letter-spacing:-0.384px;">Campaigns</div>
<svg class="abs" style="left:717.5px;top:184.5px" width="15" height="15" viewBox="0 0 15 15"><g fill="none" stroke="#444" stroke-width="1"><rect x="0.6" y="0.6" width="5.4" height="5.4" rx="1"/><rect x="9" y="0.6" width="5.4" height="5.4" rx="1"/><rect x="0.6" y="9" width="5.4" height="5.4" rx="1"/><rect x="9" y="9" width="5.4" height="5.4" rx="1"/></g><rect x="2.4" y="2.4" width="1.8" height="1.8" fill="#444"/><rect x="10.8" y="10.8" width="1.8" height="1.8" fill="#444"/></svg>
<div class="abs" style="left:739.8px;top:186.0px;font-size:12.70px;line-height:15.2px;color:#222;font-weight:bold;white-space:nowrap;letter-spacing:-0.411px;">Ad sets</div>
<div class="abs" style="left:1258px;top:181.5px;width:83px;height:22px;border-radius:11px;background:#1b74e4"></div>
<div class="abs" style="left:1265.0px;top:185.5px;font-size:11.20px;line-height:13.4px;color:#fff;white-space:nowrap;letter-spacing:-0.006px;">1 selected</div>
<svg class="abs" style="left:1326px;top:189px" width="8" height="8" viewBox="0 0 8 8"><path d="M0.8 0.8 L7.2 7.2 M7.2 0.8 L0.8 7.2" stroke="#fff" stroke-width="1.3" stroke-linecap="round"/></svg>
<svg class="abs" style="left:1367.5px;top:185.5px" width="15" height="14" viewBox="0 0 15 14"><rect x="0.6" y="0.6" width="13.8" height="12.8" rx="1.2" fill="none" stroke="#444" stroke-width="1.1"/><path d="M0.6 3.8 H14.4" stroke="#444" stroke-width="1"/><rect x="2.2" y="1.8" width="2" height="1" fill="#444"/></svg>
<div class="abs" style="left:1389.5px;top:186.0px;font-size:12.70px;line-height:15.2px;color:#222;font-weight:bold;white-space:nowrap;letter-spacing:-0.245px;">Ads for 1 Ad set</div>
<div class="card" style="left:51px;top:208.6px;width:1956px;height:44px;border-radius:7px 7px 0 0"></div>
<div class="btn" style="left:57.5px;top:215.3px;width:75.5px;background:#5eb832"></div>
<svg class="abs" style="left:69px;top:224.6px" width="10" height="10" viewBox="0 0 10 10"><path d="M5 0.6 V9.4 M0.6 5 H9.4" stroke="#fff" stroke-width="1.1" stroke-linecap="round"/></svg>
<div class="abs" style="left:86.3px;top:222.4px;font-size:11.60px;line-height:13.9px;color:#fff;font-weight:bold;white-space:nowrap;letter-spacing:-0.435px;">Create</div>
<div class="btn" style="left:139.0px;top:215.3px;width:31.5px;background:#e3e3e4;border-radius:5px 0 0 5px"><svg class="abs" style="left:8.8px;top:7.2px" width="14" height="14" viewBox="0 0 14 14"><path d="M1.2 3.4 Q0.4 7 1.6 11.6" fill="none" stroke="#8c8f94" stroke-width="1.2"/><path d="M3.6 2.4 Q3.6 1.4 4.6 1.4 H7.6 L10.6 4.4 V9.6 Q10.6 10.6 9.6 10.6 H4.6 Q3.6 10.6 3.6 9.6Z" fill="#8c8f94"/><path d="M6.2 4 H12 Q13 4 13 5 V12 Q13 13 12 13 H7.2 Q6.2 13 6.2 12Z" fill="#8c8f94" stroke="#e3e3e4" stroke-width="0.8"/></svg></div>
<div class="btn" style="left:173.0px;top:215.3px;width:31.5px;background:#e3e3e4;border-radius:0 5px 5px 0"><svg class="abs" style="left:11.2px;top:11.8px" width="9" height="5" viewBox="0 0 9 5"><path d="M0.4 0.6 H8.4 L4.4 4.8Z" fill="#8c8f94"/></svg></div>
<div class="btn" style="left:211px;top:215.3px;width:59.5px;border-radius:5px 0 0 5px"></div>
<svg class="abs" style="left:221.5px;top:223.5px" width="12" height="12" viewBox="0 0 12 12"><path d="M0.3 11.7 L0.8 8.6 L7.2 2.2 L9.8 4.8 L3.4 11.2 Z M8 1.4 L9 0.4 Q9.6 -0.1 10.2 0.4 L11.6 1.8 Q12.1 2.4 11.6 3 L10.6 4 Z" fill="#8c8f94"/></svg>
<div class="abs" style="left:240.0px;top:222.6px;font-size:11.40px;line-height:13.7px;color:#8c8f94;white-space:nowrap;letter-spacing:-0.161px;">Edit</div>
<div class="btn" style="left:273.0px;top:215.3px;width:31.5px;background:#e3e3e4;border-radius:0 5px 5px 0"><svg class="abs" style="left:11.2px;top:11.8px" width="9" height="5" viewBox="0 0 9 5"><path d="M0.4 0.6 H8.4 L4.4 4.8Z" fill="#8c8f94"/></svg></div>
<div class="btn lt" style="left:312px;top:215.3px;width:80.5px;background:#f1f1f2"></div>
<svg class="abs" style="left:321.5px;top:223px" width="12" height="13" viewBox="0 0 12 13"><path d="M3.8 0.6 H8.2 V1.8 H7.6 V5 L11.2 11 Q11.6 12.4 10.2 12.4 H1.8 Q0.4 12.4 0.8 11 L4.4 5 V1.8 H3.8Z" fill="#222"/><path d="M4.9 2 H7.1 V5.2 L8.4 7.4 H3.6 L4.9 5.2Z" fill="#eef0f3"/></svg>
<div class="abs" style="left:340.0px;top:222.6px;font-size:11.40px;line-height:13.7px;color:#333;white-space:nowrap;letter-spacing:0.073px;">A/B test</div>
<div class="btn" style="left:400.0px;top:215.3px;width:31.0px;background:#e3e3e4;border-radius:5px"><svg class="abs" style="left:8.5px;top:7.2px" width="14" height="14" viewBox="0 0 14 14"><rect x="2.4" y="2.6" width="9.2" height="10.6" rx="1.2" fill="none" stroke="#8c8f94" stroke-width="1.2"/><rect x="4.6" y="1" width="4.8" height="3" rx="0.8" fill="#8c8f94"/><path d="M4.8 7 H8 M4.8 9.6 H6.6" stroke="#8c8f94" stroke-width="1.1"/></svg></div>
<div class="btn" style="left:439.0px;top:215.3px;width:31.5px;background:#e3e3e4;border-radius:5px 0 0 5px"><svg class="abs" style="left:8.8px;top:7.2px" width="14" height="14" viewBox="0 0 14 14"><path d="M4.6 1.6 L1.6 4.6 L4.6 7.6 M1.8 4.6 H8.6 Q12.4 4.6 12.4 8.4 Q12.4 12.2 8.6 12.2 H5" fill="none" stroke="#8c8f94" stroke-width="1.25" stroke-linecap="round" stroke-linejoin="round"/></svg></div>
<div class="btn" style="left:472.0px;top:215.3px;width:31.5px;background:#e3e3e4;border-radius:0"><svg class="abs" style="left:8.8px;top:7.2px" width="14" height="14" viewBox="0 0 14 14"><path d="M1.6 3.2 H12.4 M5 3 V1.6 H9 V3" fill="none" stroke="#8c8f94" stroke-width="1.3"/><path d="M2.8 4.6 H11.2 L10.6 12 Q10.5 13 9.5 13 H4.5 Q3.5 13 3.4 12Z" fill="#8c8f94"/><path d="M5.4 6 V11.4 M7 6 V11.4 M8.6 6 V11.4" stroke="#e3e3e4" stroke-width="0.7"/></svg></div>
<div class="btn" style="left:506.0px;top:215.3px;width:34.0px;background:#f1f1f2;border-radius:0"><svg class="abs" style="left:9.5px;top:7.8px" width="15" height="13" viewBox="0 0 15 13"><path d="M1.2 1.8 H13.8 V8.6 H11.6 M3.4 8.6 H1.2 V1.8" fill="none" stroke="#3a3a3a" stroke-width="1.4"/><path d="M6 6.6 L3.8 9 L6 11.4 M3.8 9 H11.2 M9 6.6 L11.2 9 L9 11.4" fill="none" stroke="#3a3a3a" stroke-width="1.3" stroke-linecap="round" stroke-linejoin="round"/></svg></div>
<div class="btn" style="left:543.0px;top:215.3px;width:31.5px;background:#e0e0e1;border-radius:0 5px 5px 0"><svg class="abs" style="left:8.8px;top:7.2px" width="14" height="14" viewBox="0 0 14 14"><path d="M1 2.4 Q1 1 2.4 1 H6.6 L12.8 7.2 Q13.4 8 12.8 8.8 L8.8 12.8 Q8 13.4 7.2 12.8 L1 6.6Z" fill="#7e7e80"/><circle cx="4" cy="4" r="1.1" fill="#e0e0e1"/></svg></div>
<div class="btn lt" style="left:581.5px;top:215.3px;width:68px;background:#f1f1f2"></div>
<div class="abs" style="left:593.5px;top:222.6px;font-size:11.40px;line-height:13.7px;color:#333;white-space:nowrap;letter-spacing:-0.229px;">Rules</div>
<div class="abs" style="left:629.5px;top:227px;width:0;height:0;border-left:4.2px solid transparent;border-right:4.2px solid transparent;border-top:4.6px solid #1c1c1c"></div>
<div class="abs" style="left:1214.0px;top:222.6px;font-size:11.20px;line-height:13.4px;color:#444;white-space:nowrap;letter-spacing:-0.033px;">1-200 of 272</div>
<div class="btn" style="left:1283.5px;top:215.3px;width:31px;background:#e1e1e2;border-radius:5px 0 0 5px"><div class="abs" style="left:11.5px;top:10.3px;width:0;height:0;border-top:4.2px solid transparent;border-bottom:4.2px solid transparent;border-right:5px solid #7a7d82"></div></div>
<div class="btn lt" style="left:1317.5px;top:215.3px;width:30px;background:#f1f1f2;border-radius:0 5px 5px 0"><div class="abs" style="left:12.5px;top:10.3px;width:0;height:0;border-top:4.2px solid transparent;border-bottom:4.2px solid transparent;border-left:5px solid #1c1c1c"></div></div>
<div class="abs" style="left:1355.0px;top:222.6px;font-size:11.20px;line-height:13.4px;color:#444;white-space:nowrap;letter-spacing:-0.145px;">View Setup</div>
<div class="abs" style="left:1417.5px;top:221.5px;width:30px;height:16px;border-radius:8px;background:#fff;box-shadow:0 0 0 1px #e2e4e7"></div><div class="abs" style="left:1420px;top:223.3px;width:12.4px;height:12.4px;border-radius:50%;background:#3a3a3a"></div>
<div class="btn lt" style="left:1454.5px;top:215.3px;width:226.5px;background:#f1f1f2"></div>
<svg class="abs" style="left:1463.0px;top:223.5px" width="13" height="12" viewBox="0 0 13 12"><rect x="0.5" y="1.4" width="3" height="9.6" fill="#222"/><rect x="5" y="1.4" width="3" height="9.6" fill="#222"/><rect x="9.5" y="1.4" width="3" height="9.6" fill="#222"/></svg>
<div class="abs" style="left:1483.0px;top:222.6px;font-size:11.20px;line-height:13.4px;color:#333;white-space:nowrap;letter-spacing:-0.365px;">Columns: OSAA CONVERSION DM</div>
<div class="abs" style="left:1660.5px;top:227px;width:0;height:0;border-left:4.2px solid transparent;border-right:4.2px solid transparent;border-top:4.6px solid #1c1c1c"></div>
<div class="btn lt" style="left:1688.0px;top:215.3px;width:113.0px;background:#f1f1f2"></div>
<svg class="abs" style="left:1698.0px;top:223.5px" width="13" height="12" viewBox="0 0 13 12"><rect x="0.5" y="0.8" width="11" height="2.6" fill="#222"/><rect x="4" y="4.8" width="8" height="2.4" fill="#222"/><rect x="4" y="8.6" width="8" height="2.4" fill="#222"/></svg>
<div class="abs" style="left:1717.0px;top:222.6px;font-size:11.20px;line-height:13.4px;color:#333;white-space:nowrap;letter-spacing:-0.059px;">Breakdown</div>
<div class="abs" style="left:1780.5px;top:227px;width:0;height:0;border-left:4.2px solid transparent;border-right:4.2px solid transparent;border-top:4.6px solid #1c1c1c"></div>
<div class="btn lt" style="left:1808.0px;top:215.3px;width:96.5px;background:#f1f1f2"></div>
<svg class="abs" style="left:1817.0px;top:223.5px" width="13" height="12" viewBox="0 0 13 12"><path d="M0.8 1.6 Q0.4 6 1 10.4" fill="none" stroke="#222" stroke-width="1.1"/><rect x="2.6" y="0.6" width="7.4" height="10" rx="0.8" fill="#222"/><rect x="6.4" y="3" width="6" height="8.6" rx="0.8" fill="#222" stroke="#eef0f3" stroke-width="0.8"/><path d="M4 3 H5.4 M4 5 H5.4 M4 7 H5.4" stroke="#eef0f3" stroke-width="0.8"/></svg>
<div class="abs" style="left:1836.0px;top:222.6px;font-size:11.20px;line-height:13.4px;color:#333;white-space:nowrap;letter-spacing:0.040px;">Reports</div>
<div class="abs" style="left:1884.0px;top:227px;width:0;height:0;border-left:4.2px solid transparent;border-right:4.2px solid transparent;border-top:4.6px solid #1c1c1c"></div>
<div class="btn lt" style="left:1911.0px;top:215.3px;width:89.0px;background:#f1f1f2"></div>
<svg class="abs" style="left:1920.5px;top:223.5px" width="13" height="12" viewBox="0 0 13 12"><path d="M6.5 0.4 V7.2 M3.2 4.6 L6.5 8 L9.8 4.6" fill="none" stroke="#222" stroke-width="1.9"/><rect x="1.4" y="9.6" width="10.2" height="1.9" fill="#222"/></svg>
<div class="abs" style="left:1940.0px;top:222.6px;font-size:11.20px;line-height:13.4px;color:#333;white-space:nowrap;letter-spacing:-0.062px;">Export</div>
<div class="abs" style="left:1979.5px;top:227px;width:0;height:0;border-left:4.2px solid transparent;border-right:4.2px solid transparent;border-top:4.6px solid #1c1c1c"></div>
<div id="rightbar">
<svg class="abs" style="left:12px;top:15.5px" width="10" height="10" viewBox="0 0 10 10"><path d="M0.8 0.8 L9.2 9.2 M9.2 0.8 L0.8 9.2" stroke="#f0f0f0" stroke-width="1.1" stroke-linecap="round"/></svg>
<div class="abs" style="left:3px;top:42.5px;width:28.5px;height:28.5px;border-radius:5px;background:#7c7c7c"></div>
<svg class="abs" style="left:11px;top:50px" width="13" height="13" viewBox="0 0 13 13"><rect x="0.6" y="8.4" width="2" height="4" rx="0.8" fill="#fff"/><rect x="3.8" y="5.4" width="2" height="7" rx="0.8" fill="#fff"/><rect x="7" y="7" width="2" height="5.4" rx="0.8" fill="#fff"/><rect x="10.2" y="0.8" width="2" height="11.6" rx="0.8" fill="#fff"/></svg>
<svg class="abs" style="left:11.5px;top:86.5px" width="12" height="12" viewBox="0 0 12 12"><path d="M0.3 11.7 L0.8 8.6 L7.2 2.2 L9.8 4.8 L3.4 11.2 Z M8 1.4 L9 0.4 Q9.6 -0.1 10.2 0.4 L11.6 1.8 Q12.1 2.4 11.6 3 L10.6 4 Z" fill="#b9b9b9"/></svg>
<svg class="abs" style="left:10.5px;top:121px" width="13" height="13" viewBox="0 0 13 13"><circle cx="6.5" cy="6.5" r="6.2" fill="#b9b9b9"/><path d="M6.5 3 V6.8 L9 8.4" fill="none" stroke="#5f5f5f" stroke-width="1.3" stroke-linecap="round"/></svg>
</div>
<div class="card" style="left:51px;top:250.5px;width:1956px;height:563.2px;border-radius:0 0 7px 7px"></div>
<div class="abs" style="left:0;top:302.4px;width:2048px;height:449.8px;overflow:hidden">
<div class="row" style="top:0.00px;background:#e4e4e4"><div class="chk"></div><div class="abs" style="left:58.5px;top:4.8px;width:29.5px;height:14.4px;border-radius:7.5px;background:#d3dcec"></div><div class="abs" style="left:72px;top:3.6px;width:16.4px;height:16.4px;border-radius:50%;background:#1b74e4"></div><div class="name" style="letter-spacing:-0.127px">08 23 Birthday 15%</div><div class="abs" style="left:364.5px;top:0;width:66.5px;height:36.8px;overflow:hidden"><div class="cell r" style="right:9px;letter-spacing:-0.404px">Using ad set bud…</div></div><div class="cell r" style="right:1414.5px">$358,691.56</div><div class="cell r u" style="right:1308.4px"><span class="v">$79.90</span></div><div class="supb" style="right:1298.3px">[2]</div><div class="cell" style="left:672.3px;letter-spacing:-0.250px">7-day click or 1…</div><div class="cell r" style="right:1084.6px">17,003,903</div><div class="cell r u" style="right:978.5px"><span class="v">6.16</span></div><div class="supb" style="right:968.4px">[2]</div><div class="cell r u" style="right:861.6px"><span class="v">6.15</span></div><div class="supb" style="right:851.5px">[2]</div><div class="cell r u" style="right:744.7px"><span class="v">$2,207,786.73</span></div><div class="supb" style="right:734.6px">[2]</div><div class="cell r u" style="right:627.8px"><span class="v">$2,207,058.70</span></div><div class="supb" style="right:617.7px">[2]</div><div class="cell r" style="right:500.1px">$0.00</div><div class="cell r u" style="right:394.0px"><span class="v">4,489</span></div><div class="supb" style="right:383.9px">[2]</div><div class="cell r u" style="right:277.1px"><span class="v">4,486</span></div><div class="supb" style="right:267.0px">[2]</div><div class="cell r" style="right:149.4px">$0.00</div><div class="abs" style="left:1915.0px;top:10.6px;width:8px;height:1px;background:#8c8c8c"></div><svg class="abs" style="left:212.5px;top:6.5px" width="10" height="10" viewBox="0 0 12 12"><path d="M0.3 11.7 L0.8 8.6 L7.2 2.2 L9.8 4.8 L3.4 11.2 Z M8 1.4 L9 0.4 Q9.6 -0.1 10.2 0.4 L11.6 1.8 Q12.1 2.4 11.6 3 L10.6 4 Z" fill="#4a4a4a"/></svg><svg class="abs" style="left:115.0px;top:23px" width="10" height="9" viewBox="0 0 10 9"><path d="M1 9 V6 M3.4 9 V3.4 M5.8 9 V5 M8.2 9 V0.6" stroke="#333" stroke-width="1.3"/></svg><div class="abs" style="left:127.0px;top:22px;font-size:9px;line-height:11px;color:#4f4f4f;white-space:nowrap;letter-spacing:0.241px">View Charts</div><svg class="abs" style="left:188.0px;top:23px" width="9.5" height="9.5" viewBox="0 0 12 12"><path d="M0.3 11.7 L0.8 8.6 L7.2 2.2 L9.8 4.8 L3.4 11.2 Z M8 1.4 L9 0.4 Q9.6 -0.1 10.2 0.4 L11.6 1.8 Q12.1 2.4 11.6 3 L10.6 4 Z" fill="#333"/></svg><div class="abs" style="left:201.0px;top:22px;font-size:9px;line-height:11px;color:#4f4f4f;white-space:nowrap;letter-spacing:0.123px">Edit</div><svg class="abs" style="left:226.5px;top:22.5px" width="10" height="10" viewBox="0 0 14 14"><path d="M1.2 3.4 Q0.4 7 1.6 11.6" fill="none" stroke="#333" stroke-width="1.2"/><path d="M3.6 2.4 Q3.6 1.4 4.6 1.4 H7.6 L10.6 4.4 V9.6 Q10.6 10.6 9.6 10.6 H4.6 Q3.6 10.6 3.6 9.6Z" fill="#333"/><path d="M6.2 4 H12 Q13 4 13 5 V12 Q13 13 12 13 H7.2 Q6.2 13 6.2 12Z" fill="#333" stroke="#e4e4e4" stroke-width="0.8"/></svg><div class="abs" style="left:240.0px;top:22px;font-size:9px;line-height:11px;color:#4f4f4f;white-space:nowrap;letter-spacing:0.275px">Duplicate</div><svg class="abs" style="left:290.0px;top:23px" width="10" height="10" viewBox="0 0 10 10"><path d="M5.6 0.6 L9.4 4.4 L8 4.8 L6.6 6.2 L6.4 8.4 L1.6 3.6 L3.8 3.4 L5.2 2Z" fill="#333"/><path d="M3.8 6.2 L0.8 9.2" stroke="#333" stroke-width="1.1"/></svg><div class="abs" style="left:302.5px;top:22px;font-size:9px;line-height:11px;color:#4f4f4f;white-space:nowrap;letter-spacing:0.164px">Pin</div></div>
<div class="row" style="top:36.83px;background:#f4f6f8"><div class="chk"></div><div class="tog"><i></i></div><div class="name" style="letter-spacing:-0.124px">08 23 Retarget 15%</div><div class="abs" style="left:364.5px;top:0;width:66.5px;height:36.8px;overflow:hidden"><div class="cell r" style="right:9px;letter-spacing:-0.404px">Using ad set bud…</div></div><div class="cell r" style="right:1414.5px">$114,910.33</div><div class="cell r u" style="right:1308.4px"><span class="v">$61.38</span></div><div class="supb" style="right:1298.3px">[2]</div><div class="cell" style="left:672.3px;letter-spacing:-0.250px">7-day click or 1…</div><div class="cell r" style="right:1084.6px">6,902,260</div><div class="cell r u" style="right:978.5px"><span class="v">9.55</span></div><div class="supb" style="right:968.4px">[2]</div><div class="cell r u" style="right:861.6px"><span class="v">9.54</span></div><div class="supb" style="right:851.5px">[2]</div><div class="cell r u" style="right:744.7px"><span class="v">$1,097,265.97</span></div><div class="supb" style="right:734.6px">[2]</div><div class="cell r u" style="right:627.8px"><span class="v">$1,096,796.59</span></div><div class="supb" style="right:617.7px">[2]</div><div class="cell r" style="right:500.1px">$0.00</div><div class="cell r u" style="right:394.0px"><span class="v">1,872</span></div><div class="supb" style="right:383.9px">[2]</div><div class="cell r u" style="right:277.1px"><span class="v">1,870</span></div><div class="supb" style="right:267.0px">[2]</div><div class="cell r" style="right:149.4px">$0.00</div><div class="abs" style="left:1915.0px;top:10.6px;width:8px;height:1px;background:#8c8c8c"></div></div>
<div class="row" style="top:73.66px;background:#ffffff"><div class="chk"></div><div class="tog"><i></i></div><div class="name" style="letter-spacing:-0.078px">11 23 Retarget 20%</div><div class="abs" style="left:364.5px;top:0;width:66.5px;height:36.8px;overflow:hidden"><div class="cell r" style="right:9px;letter-spacing:-0.404px">Using ad set bud…</div></div><div class="cell r" style="right:1414.5px">$58,824.00</div><div class="cell r u" style="right:1308.4px"><span class="v">$39.24</span></div><div class="supb" style="right:1298.3px">[2]</div><div class="cell" style="left:672.3px;letter-spacing:-0.250px">7-day click or 1…</div><div class="cell r" style="right:1084.6px">3,013,062</div><div class="cell r u" style="right:978.5px"><span class="v">13.23</span></div><div class="supb" style="right:968.4px">[2]</div><div class="cell r u" style="right:861.6px"><span class="v">13.23</span></div><div class="supb" style="right:851.5px">[2]</div><div class="cell r u" style="right:744.7px"><span class="v">$778,023.72</span></div><div class="supb" style="right:734.6px">[2]</div><div class="cell r u" style="right:627.8px"><span class="v">$778,023.72</span></div><div class="supb" style="right:617.7px">[2]</div><div class="cell r" style="right:500.1px">$0.00</div><div class="cell r u" style="right:394.0px"><span class="v">1,499</span></div><div class="supb" style="right:383.9px">[2]</div><div class="cell r u" style="right:277.1px"><span class="v">1,499</span></div><div class="supb" style="right:267.0px">[2]</div><div class="cell r" style="right:149.4px">$0.00</div><div class="abs" style="left:1915.0px;top:10.6px;width:8px;height:1px;background:#8c8c8c"></div></div>
<div class="row" style="top:110.49px;background:#f4f6f8"><div class="chk"></div><div class="tog"><i></i></div><div class="name" style="letter-spacing:-0.163px">07 2022 Catalogue Retarget OSAA 20% OFF</div><div class="cell r" style="right:1531.0px">$500.00</div><div class="sub" style="right:1531.0px">Daily</div><div class="cell r" style="right:1414.5px">$56,566.23</div><div class="cell r u" style="right:1308.4px"><span class="v">$73.18</span></div><div class="supb" style="right:1298.3px">[2]</div><div class="cell" style="left:672.3px;letter-spacing:-0.250px">7-day click or 1…</div><div class="cell r" style="right:1084.6px">3,048,971</div><div class="cell r u" style="right:978.5px"><span class="v">7.69</span></div><div class="supb" style="right:968.4px">[2]</div><div class="cell r u" style="right:861.6px"><span class="v">7.69</span></div><div class="supb" style="right:851.5px">[2]</div><div class="cell r u" style="right:744.7px"><span class="v">$435,185.50</span></div><div class="supb" style="right:734.6px">[2]</div><div class="cell r u" style="right:627.8px"><span class="v">$435,185.50</span></div><div class="supb" style="right:617.7px">[2]</div><div class="cell r" style="right:500.1px">$0.00</div><div class="cell r u" style="right:394.0px"><span class="v">773</span></div><div class="supb" style="right:383.9px">[2]</div><div class="cell r u" style="right:277.1px"><span class="v">773</span></div><div class="supb" style="right:267.0px">[2]</div><div class="cell r" style="right:149.4px">$0.00</div><div class="abs" style="left:1915.0px;top:10.6px;width:8px;height:1px;background:#8c8c8c"></div></div>
<div class="row" style="top:147.32px;background:#ffffff"><div class="chk"></div><div class="tog"><i></i></div><div class="name" style="letter-spacing:-0.127px">23 11 BF CM 25% Campaign</div><div class="abs" style="left:364.5px;top:0;width:66.5px;height:36.8px;overflow:hidden"><div class="cell r" style="right:9px;letter-spacing:-0.404px">Using ad set bud…</div></div><div class="cell r" style="right:1414.5px">$66,571.81</div><div class="cell r u" style="right:1308.4px"><span class="v">$99.81</span></div><div class="supb" style="right:1298.3px">[2]</div><div class="cell" style="left:672.3px;letter-spacing:-0.250px">7-day click or 1…</div><div class="cell r" style="right:1084.6px">1,594,865</div><div class="cell r u" style="right:978.5px"><span class="v">4.77</span></div><div class="supb" style="right:968.4px">[2]</div><div class="cell r u" style="right:861.6px"><span class="v">4.77</span></div><div class="supb" style="right:851.5px">[2]</div><div class="cell r u" style="right:744.7px"><span class="v">$317,721.65</span></div><div class="supb" style="right:734.6px">[2]</div><div class="cell r u" style="right:627.8px"><span class="v">$317,721.65</span></div><div class="supb" style="right:617.7px">[2]</div><div class="cell r" style="right:500.1px">$0.00</div><div class="cell r u" style="right:394.0px"><span class="v">667</span></div><div class="supb" style="right:383.9px">[2]</div><div class="cell r u" style="right:277.1px"><span class="v">667</span></div><div class="supb" style="right:267.0px">[2]</div><div class="cell r" style="right:149.4px">$0.00</div><div class="abs" style="left:1915.0px;top:10.6px;width:8px;height:1px;background:#8c8c8c"></div></div>
<div class="row" style="top:184.15px;background:#f4f6f8"><div class="chk"></div><div class="tog"><i></i></div><div class="name" style="letter-spacing:0.025px">23 11 Jenae Advantage+ Shopping Campaign</div><div class="abs" style="left:364.5px;top:0;width:66.5px;height:36.8px;overflow:hidden"><div class="cell r" style="right:9px;letter-spacing:-0.404px">Using ad set bud…</div></div><div class="cell r" style="right:1414.5px">$57,595.69</div><div class="cell r u" style="right:1308.4px"><span class="v">$93.50</span></div><div class="supb" style="right:1298.3px">[2]</div><div class="cell" style="left:672.3px;letter-spacing:-0.250px">7-day click or 1…</div><div class="cell r" style="right:1084.6px">2,114,422</div><div class="cell r u" style="right:978.5px"><span class="v">6.77</span></div><div class="supb" style="right:968.4px">[2]</div><div class="cell r u" style="right:861.6px"><span class="v">6.77</span></div><div class="supb" style="right:851.5px">[2]</div><div class="cell r u" style="right:744.7px"><span class="v">$389,977.13</span></div><div class="supb" style="right:734.6px">[2]</div><div class="cell r u" style="right:627.8px"><span class="v">$389,977.13</span></div><div class="supb" style="right:617.7px">[2]</div><div class="cell r" style="right:500.1px">$0.00</div><div class="cell r u" style="right:394.0px"><span class="v">616</span></div><div class="supb" style="right:383.9px">[2]</div><div class="cell r u" style="right:277.1px"><span class="v">616</span></div><div class="supb" style="right:267.0px">[2]</div><div class="cell r" style="right:149.4px">$0.00</div><div class="abs" style="left:1915.0px;top:10.6px;width:8px;height:1px;background:#8c8c8c"></div></div>
<div class="row" style="top:220.98px;background:#ffffff"><div class="chk"></div><div class="tog"><i></i></div><div class="name" style="letter-spacing:-0.124px">05 23 Retarget 20%</div><div class="cell r" style="right:1531.0px">$750.00</div><div class="sub" style="right:1531.0px">Daily</div><div class="cell r" style="right:1414.5px">$24,511.77</div><div class="cell r u" style="right:1308.4px"><span class="v">$40.05</span></div><div class="supb" style="right:1298.3px">[2]</div><div class="cell" style="left:672.3px;letter-spacing:-0.250px">7-day click or 1…</div><div class="cell r" style="right:1084.6px">1,006,704</div><div class="cell r u" style="right:978.5px"><span class="v">12.04</span></div><div class="supb" style="right:968.4px">[2]</div><div class="cell r u" style="right:861.6px"><span class="v">12.04</span></div><div class="supb" style="right:851.5px">[2]</div><div class="cell r u" style="right:744.7px"><span class="v">$295,203.47</span></div><div class="supb" style="right:734.6px">[2]</div><div class="cell r u" style="right:627.8px"><span class="v">$295,203.47</span></div><div class="supb" style="right:617.7px">[2]</div><div class="cell r" style="right:500.1px">$0.00</div><div class="cell r u" style="right:394.0px"><span class="v">612</span></div><div class="supb" style="right:383.9px">[2]</div><div class="cell r u" style="right:277.1px"><span class="v">612</span></div><div class="supb" style="right:267.0px">[2]</div><div class="cell r" style="right:149.4px">$0.00</div><div class="abs" style="left:1915.0px;top:10.6px;width:8px;height:1px;background:#8c8c8c"></div></div>
<div class="row" style="top:257.81px;background:#f4f6f8"><div class="chk"></div><div class="tog"><i></i></div><div class="name" style="letter-spacing:-0.028px">23 12 Jenae Classic Sale campaign B2B</div><div class="abs" style="left:364.5px;top:0;width:66.5px;height:36.8px;overflow:hidden"><div class="cell r" style="right:9px;letter-spacing:-0.404px">Using ad set bud…</div></div><div class="cell r" style="right:1414.5px">$61,605.44</div><div class="cell r u" style="right:1308.4px"><span class="v">$104.24</span></div><div class="supb" style="right:1298.3px">[2]</div><div class="cell" style="left:672.3px;letter-spacing:-0.250px">7-day click or 1…</div><div class="cell r" style="right:1084.6px">3,215,853</div><div class="cell r u" style="right:978.5px"><span class="v">3.85</span></div><div class="supb" style="right:968.4px">[2]</div><div class="cell r u" style="right:861.6px"><span class="v">3.85</span></div><div class="supb" style="right:851.5px">[2]</div><div class="cell r u" style="right:744.7px"><span class="v">$236,961.40</span></div><div class="supb" style="right:734.6px">[2]</div><div class="cell r u" style="right:627.8px"><span class="v">$236,961.40</span></div><div class="supb" style="right:617.7px">[2]</div><div class="cell r" style="right:500.1px">$0.00</div><div class="cell r u" style="right:394.0px"><span class="v">591</span></div><div class="supb" style="right:383.9px">[2]</div><div class="cell r u" style="right:277.1px"><span class="v">591</span></div><div class="supb" style="right:267.0px">[2]</div><div class="cell r" style="right:149.4px">$0.00</div><div class="abs" style="left:1915.0px;top:10.6px;width:8px;height:1px;background:#8c8c8c"></div></div>
<div class="row" style="top:294.64px;background:#ffffff"><div class="chk"></div><div class="tog"><i></i></div><div class="name" style="letter-spacing:-0.124px">05 23 Retarget 15%</div><div class="cell r" style="right:1531.0px">$1,000.00</div><div class="sub" style="right:1531.0px">Daily</div><div class="cell r" style="right:1414.5px">$41,233.48</div><div class="cell r u" style="right:1308.4px"><span class="v">$70.97</span></div><div class="supb" style="right:1298.3px">[2]</div><div class="cell" style="left:672.3px;letter-spacing:-0.250px">7-day click or 1…</div><div class="cell r" style="right:1084.6px">1,950,706</div><div class="cell r u" style="right:978.5px"><span class="v">8.78</span></div><div class="supb" style="right:968.4px">[2]</div><div class="cell r u" style="right:861.6px"><span class="v">8.78</span></div><div class="supb" style="right:851.5px">[2]</div><div class="cell r u" style="right:744.7px"><span class="v">$362,121.39</span></div><div class="supb" style="right:734.6px">[2]</div><div class="cell r u" style="right:627.8px"><span class="v">$362,121.39</span></div><div class="supb" style="right:617.7px">[2]</div><div class="cell r" style="right:500.1px">$0.00</div><div class="cell r u" style="right:394.0px"><span class="v">581</span></div><div class="supb" style="right:383.9px">[2]</div><div class="cell r u" style="right:277.1px"><span class="v">581</span></div><div class="supb" style="right:267.0px">[2]</div><div class="cell r" style="right:149.4px">$0.00</div><div class="abs" style="left:1915.0px;top:10.6px;width:8px;height:1px;background:#8c8c8c"></div></div>
<div class="row" style="top:331.47px;background:#f4f6f8"><div class="chk"></div><div class="tog"><i></i></div><div class="name" style="letter-spacing:-0.022px">05 23 Mother's Day</div><div class="cell r" style="right:1531.0px">$3,500.00</div><div class="sub" style="right:1531.0px">Daily</div><div class="cell r" style="right:1414.5px">$50,751.51</div><div class="cell r u" style="right:1308.4px"><span class="v">$96.49</span></div><div class="supb" style="right:1298.3px">[2]</div><div class="cell" style="left:672.3px;letter-spacing:-0.250px">7-day click or 1…</div><div class="cell r" style="right:1084.6px">2,793,589</div><div class="cell r u" style="right:978.5px"><span class="v">4.66</span></div><div class="supb" style="right:968.4px">[2]</div><div class="cell r u" style="right:861.6px"><span class="v">4.59</span></div><div class="supb" style="right:851.5px">[2]</div><div class="cell r u" style="right:744.7px"><span class="v">$236,411.94</span></div><div class="supb" style="right:734.6px">[2]</div><div class="cell r u" style="right:627.8px"><span class="v">$232,947.90</span></div><div class="supb" style="right:617.7px">[2]</div><div class="cell r" style="right:500.1px">$0.00</div><div class="cell r u" style="right:394.0px"><span class="v">526</span></div><div class="supb" style="right:383.9px">[2]</div><div class="cell r u" style="right:277.1px"><span class="v">514</span></div><div class="supb" style="right:267.0px">[2]</div><div class="cell r" style="right:149.4px">$0.00</div><div class="abs" style="left:1915.0px;top:10.6px;width:8px;height:1px;background:#8c8c8c"></div></div>
<div class="row" style="top:368.30px;background:#ffffff"><div class="chk"></div><div class="tog"><i></i></div><div class="name" style="letter-spacing:-0.057px">23 12 25% Last chance of the year B2B</div><div class="abs" style="left:364.5px;top:0;width:66.5px;height:36.8px;overflow:hidden"><div class="cell r" style="right:9px;letter-spacing:-0.404px">Using ad set bud…</div></div><div class="cell r" style="right:1414.5px">$33,529.92</div><div class="cell r u" style="right:1308.4px"><span class="v">$70.15</span></div><div class="supb" style="right:1298.3px">[2]</div><div class="cell" style="left:672.3px;letter-spacing:-0.250px">7-day click or 1…</div><div class="cell r" style="right:1084.6px">1,543,506</div><div class="cell r u" style="right:978.5px"><span class="v">6.09</span></div><div class="supb" style="right:968.4px">[2]</div><div class="cell r u" style="right:861.6px"><span class="v">6.09</span></div><div class="supb" style="right:851.5px">[2]</div><div class="cell r u" style="right:744.7px"><span class="v">$204,272.60</span></div><div class="supb" style="right:734.6px">[2]</div><div class="cell r u" style="right:627.8px"><span class="v">$204,272.60</span></div><div class="supb" style="right:617.7px">[2]</div><div class="cell r" style="right:500.1px">$0.00</div><div class="cell r u" style="right:394.0px"><span class="v">478</span></div><div class="supb" style="right:383.9px">[2]</div><div class="cell r u" style="right:277.1px"><span class="v">478</span></div><div class="supb" style="right:267.0px">[2]</div><div class="cell r" style="right:149.4px">$0.00</div><div class="abs" style="left:1915.0px;top:10.6px;width:8px;height:1px;background:#8c8c8c"></div></div>
<div class="row" style="top:405.13px;background:#f4f6f8"><div class="chk"></div><div class="tog"><i></i></div><div class="name" style="letter-spacing:-0.032px">06 23 June Birthstone 15%</div><div class="abs" style="left:364.5px;top:0;width:66.5px;height:36.8px;overflow:hidden"><div class="cell r" style="right:9px;letter-spacing:-0.404px">Using ad set bud…</div></div><div class="cell r" style="right:1414.5px">$40,719.85</div><div class="cell r u" style="right:1308.4px"><span class="v">$90.29</span></div><div class="supb" style="right:1298.3px">[2]</div><div class="cell" style="left:672.3px;letter-spacing:-0.250px">7-day click or 1…</div><div class="cell r" style="right:1084.6px">1,804,124</div><div class="cell r u" style="right:978.5px"><span class="v">3.84</span></div><div class="supb" style="right:968.4px">[2]</div><div class="cell r u" style="right:861.6px"><span class="v">3.83</span></div><div class="supb" style="right:851.5px">[2]</div><div class="cell r u" style="right:744.7px"><span class="v">$156,501.53</span></div><div class="supb" style="right:734.6px">[2]</div><div class="cell r u" style="right:627.8px"><span class="v">$156,063.10</span></div><div class="supb" style="right:617.7px">[2]</div><div class="cell r" style="right:500.1px">$0.00</div><div class="cell r u" style="right:394.0px"><span class="v">451</span></div><div class="supb" style="right:383.9px">[2]</div><div class="cell r u" style="right:277.1px"><span class="v">449</span></div><div class="supb" style="right:267.0px">[2]</div><div class="cell r" style="right:149.4px">$0.00</div><div class="abs" style="left:1915.0px;top:10.6px;width:8px;height:1px;background:#8c8c8c"></div></div>
<div class="row" style="top:441.96px;background:#ffffff"><div class="chk"></div><div class="tog"><i></i></div><div class="name" style="letter-spacing:-0.120px">05 23 Spring</div><div class="cell r" style="right:1531.0px">$2,000.00</div><div class="sub" style="right:1531.0px">Daily</div><div class="cell r" style="right:1414.5px">$44,634.77</div><div class="cell r u" style="right:1308.4px"><span class="v">$85.40</span></div><div class="supb" style="right:1298.3px">[2]</div><div class="cell" style="left:672.3px;letter-spacing:-0.250px">7-day click or 1…</div><div class="cell r" style="right:1084.6px">1,116,438</div><div class="cell r u" style="right:978.5px"><span class="v">4.54</span></div><div class="supb" style="right:968.4px">[2]</div><div class="cell r u" style="right:861.6px"><span class="v">4.54</span></div><div class="supb" style="right:851.5px">[2]</div><div class="cell r u" style="right:744.7px"><span class="v">$185,577.15</span></div><div class="supb" style="right:734.6px">[2]</div><div class="cell r u" style="right:627.8px"><span class="v">$185,577.15</span></div><div class="supb" style="right:617.7px">[2]</div><div class="cell r" style="right:500.1px">$0.00</div><div class="cell r u" style="right:394.0px"><span class="v">456</span></div><div class="supb" style="right:383.9px">[2]</div><div class="cell r u" style="right:277.1px"><span class="v">456</span></div><div class="supb" style="right:267.0px">[2]</div><div class="cell r" style="right:149.4px">$0.00</div><div class="abs" style="left:1915.0px;top:10.6px;width:8px;height:1px;background:#8c8c8c"></div></div>
</div>
<div class="chk" style="left:61.3px;top:267.3px;width:18.6px;height:18.6px"></div>
<div class="hdr" style="left:90.0px;width:68.8px;color:#2f2f2f"><div><div style="letter-spacing:0.088px">Off/On</div></div></div>
<div class="hdr" style="left:158.8px;width:256.8px;color:#2f2f2f"><div><div style="letter-spacing:-0.030px">Campaign</div></div><i class="car"></i></div>
<div class="abs" style="left:415.5px;top:250.5px;width:66px;height:51.3px;overflow:hidden"><div class="abs" style="right:62.5px;top:19.2px;font-weight:bold;font-size:10.6px;line-height:12.8px;color:#2f2f2f;white-space:nowrap">Budget</div></div>
<div class="hdr" style="left:482.5px;width:116.8px;color:#2f2f2f"><div><div style="letter-spacing:-0.063px">Amount spent</div></div><i class="car"></i></div>
<div class="hdr" style="left:599.3px;width:116.9px;color:#2f2f2f"><div><div style="letter-spacing:-0.062px">Cost per</div><div style="letter-spacing:-0.079px">purchase</div></div><i class="car"></i></div>
<div class="hdr" style="left:716.2px;width:96.1px;color:#2f2f2f"><div><div style="letter-spacing:0.031px">Attribution</div><div style="letter-spacing:0.036px">setting</div></div></div>
<div class="hdr" style="left:812.3px;width:116.9px;color:#2f2f2f"><div><div style="letter-spacing:-0.041px">Impressions</div></div><i class="car"></i></div>
<div class="hdr" style="left:929.2px;width:116.9px;color:#2f2f2f"><div><div style="letter-spacing:-0.177px">Purchase ROAS</div><div style="letter-spacing:-0.028px">(return on ad</div><div style="letter-spacing:0.042px">spend)</div></div><i class="car"></i></div>
<div class="hdr" style="left:1046.1px;width:116.9px;color:#2f2f2f"><div><div style="letter-spacing:0.007px">Website</div><div style="letter-spacing:-0.169px">purchase ROAS</div><div style="letter-spacing:-0.241px">(return on…</div></div><i class="car"></i></div>
<div class="hdr" style="left:1163.0px;width:116.9px;color:#2f2f2f"><div><div style="letter-spacing:-0.069px">Purchases</div><div style="letter-spacing:-0.069px">conversion value</div></div><i class="car"></i></div>
<div class="hdr" style="left:1279.9px;width:116.9px;color:#2f2f2f"><div><div style="letter-spacing:0.007px">Website</div><div style="letter-spacing:-0.114px">purchases</div><div style="letter-spacing:-0.069px">conversion value</div></div><i class="car"></i></div>
<div class="hdr" style="left:1396.8px;width:116.9px;color:#2f2f2f"><div><div style="letter-spacing:-0.039px">Other offline</div><div style="letter-spacing:-0.069px">conversion value</div></div><i class="car"></i></div>
<div class="hdr" style="left:1513.7px;width:116.9px;color:#1a69d4"><div style="letter-spacing:-0.069px">Purchases</div><svg style="margin-left:2px" width="8" height="10" viewBox="0 0 8 10"><path d="M4 0.6 V9 M0.8 5.8 L4 9 L7.2 5.8" fill="none" stroke="#1a69d4" stroke-width="1.2"/></svg><i class="car"></i></div>
<div class="hdr" style="left:1630.6px;width:116.9px;color:#2f2f2f"><div><div style="letter-spacing:0.007px">Website</div><div style="letter-spacing:-0.114px">purchases</div></div><i class="car"></i></div>
<div class="hdr" style="left:1747.5px;width:116.9px;color:#2f2f2f"><div><div style="letter-spacing:-0.009px">Offline</div><div style="letter-spacing:-0.114px">purchases</div><div style="letter-spacing:-0.069px">conversion value</div></div><i class="car"></i></div>
<div class="hdr" style="left:1864.4px;width:116.9px;color:#2f2f2f"><div><div style="letter-spacing:-0.009px">Offline</div><div style="letter-spacing:-0.114px">purchases</div></div><i class="car"></i></div>
<svg class="abs" style="left:1989.5px;top:270.5px" width="9" height="9" viewBox="0 0 9 9"><circle cx="4.5" cy="4.5" r="4.3" fill="#c4c7cb"/><path d="M4.5 2.2 V6.8 M2.2 4.5 H6.8" stroke="#fff" stroke-width="1"/></svg>
<div class="abs" style="left:51px;top:301.6px;width:1956px;height:1px;background:#e1e3e6"></div>
<div class="abs" style="left:51px;top:250.5px;width:1956px;height:1px;background:#e6e8eb"></div>
<div class="abs" style="left:51px;top:748.2px;width:1956px;height:4px;background:linear-gradient(180deg,rgba(0,0,0,0) 0,rgba(0,0,0,0.10) 100%)"></div>
<div class="abs" style="left:51px;top:752.2px;width:1956px;height:50.8px;background:#fff"></div>
<div class="abs" style="left:51px;top:802.0px;width:1956px;height:1px;background:#e6e8eb"></div>
<div class="foot" style="left:168.7px;text-align:left;letter-spacing:-0.232px">Results from 272 campaigns</div>
<svg class="abs" style="left:317px;top:760.2px" width="9.6" height="9.6" viewBox="0 0 10 10"><circle cx="5" cy="5" r="4.8" fill="#2c2c2c"/><rect x="4.3" y="4.2" width="1.4" height="3.6" fill="#fff"/><circle cx="5" cy="2.7" r="0.85" fill="#fff"/></svg>
<div class="foot" style="right:1454.2px">$1,441,340.91</div><div class="foot2" style="right:1454.2px">Total Spent</div>
<div class="foot u" style="right:1348.0px"><span class="v">$85.70</span></div><div class="supb" style="right:1337.3px;top:758.6px;font-weight:bold;color:#444">[2]</div><div class="foot2" style="right:1348.0px">Per Action</div>
<div class="foot" style="left:725px;text-align:left;letter-spacing:-0.384px">7-day click or …</div>
<div class="foot" style="right:1124.0px">78,198,539</div><div class="foot2" style="right:1124.0px">Total</div>
<div class="foot u" style="right:1018.1px"><span class="v">5.78</span></div><div class="supb" style="right:1007.4px;top:758.6px;font-weight:bold;color:#444">[2]</div><div class="foot2" style="right:1018.1px">Average</div>
<div class="foot u" style="right:901.2px"><span class="v">5.76</span></div><div class="supb" style="right:890.5px;top:758.6px;font-weight:bold;color:#444">[2]</div><div class="foot2" style="right:901.2px">Average</div>
<div class="foot u" style="right:784.3px"><span class="v">$8,329,533.78</span></div><div class="supb" style="right:773.6px;top:758.6px;font-weight:bold;color:#444">[2]</div><div class="foot2" style="right:784.3px">Total</div>
<div class="foot u" style="right:667.4px"><span class="v">$8,305,791.04</span></div><div class="supb" style="right:656.7px;top:758.6px;font-weight:bold;color:#444">[2]</div><div class="foot2" style="right:667.4px">Total</div>
<div class="foot" style="right:539.5px">$0.00</div><div class="foot2" style="right:539.5px">Total</div>
<div class="foot u" style="right:433.6px"><span class="v">16,818</span></div><div class="supb" style="right:422.9px;top:758.6px;font-weight:bold;color:#444">[2]</div><div class="foot2" style="right:433.6px">Total</div>
<div class="foot u" style="right:316.7px"><span class="v">16,705</span></div><div class="supb" style="right:306.0px;top:758.6px;font-weight:bold;color:#444">[2]</div><div class="foot2" style="right:316.7px">Total</div>
<div class="foot" style="right:188.8px">$0.00</div><div class="foot2" style="right:188.8px">Total</div>
<div class="abs" style="left:1967.5px;top:763.6px;width:8px;height:1.3px;background:#444"></div><div class="foot2" style="right:72.0px">Total</div>
<div class="vline" style="left:89.5px;height:501.7px"></div>
<div class="vline" style="left:158.2px;height:551.5px"></div>
<div class="abs" style="left:412.6px;top:250.5px;width:3.6px;height:551.5px;background:linear-gradient(90deg,rgba(0,0,0,0) 0,rgba(0,0,0,0.04) 50%,rgba(0,0,0,0.115) 100%)"></div>
<div class="vline" style="left:482.0px;height:551.5px"></div>
<div class="vline" style="left:598.8px;height:551.5px"></div>
<div class="vline" style="left:715.7px;height:551.5px"></div>
<div class="vline" style="left:811.8px;height:551.5px"></div>
<div class="vline" style="left:928.7px;height:551.5px"></div>
<div class="vline" style="left:1045.6px;height:551.5px"></div>
<div class="vline" style="left:1162.5px;height:551.5px"></div>
<div class="vline" style="left:1279.4px;height:551.5px"></div>
<div class="vline" style="left:1396.3px;height:551.5px"></div>
<div class="vline" style="left:1513.2px;height:551.5px"></div>
<div class="vline" style="left:1630.1px;height:551.5px"></div>
<div class="vline" style="left:1747.0px;height:551.5px"></div>
<div class="vline" style="left:1863.9px;height:551.5px"></div>
<div class="vline" style="left:1980.8px;height:551.5px"></div>
<div class="abs" style="left:93px;top:805px;width:1910px;height:6px;border-radius:3px;background:#c8c8c8"></div>
<div id="taskbar">
<svg class="abs" style="left:537.7px;top:9.0px" width="20" height="20" viewBox="0 0 20 20"><defs><linearGradient id="wg" x1="0" y1="0" x2="1" y2="1"><stop offset="0" stop-color="#6fd4ff"/><stop offset="1" stop-color="#1d8fe6"/></linearGradient></defs><rect x="0.4" y="0.4" width="8.9" height="8.9" rx="0.6" fill="url(#wg)"/><rect x="10.5" y="0.4" width="8.9" height="8.9" rx="0.6" fill="url(#wg)"/><rect x="0.4" y="10.5" width="8.9" height="8.9" rx="0.6" fill="url(#wg)"/><rect x="10.5" y="10.5" width="8.9" height="8.9" rx="0.6" fill="url(#wg)"/></svg>
<div class="abs" style="left:567px;top:6.5px;width:177px;height:25px;border-radius:12.5px;background:#2f2f2f;box-shadow:inset 0 0 0 1px #3d3d3d"></div>
<svg class="abs" style="left:576px;top:12px" width="13" height="13" viewBox="0 0 13 13"><circle cx="5.4" cy="5.4" r="4.2" fill="none" stroke="#e6e6e6" stroke-width="1.3"/><path d="M8.6 8.6 L12 12" stroke="#e6e6e6" stroke-width="1.5" stroke-linecap="round"/></svg>
<div class="abs" style="left:597px;top:11.5px;font-size:11.6px;line-height:14px;color:#d4d4d4;letter-spacing:-0.626px">Search</div>
<svg class="abs" style="left:703px;top:9px" width="37" height="21" viewBox="0 0 37 21"><ellipse cx="18" cy="17" rx="17" ry="3.6" fill="#e2c08d"/><path d="M4 13 L8 4 L20 6 L16 16Z" fill="#f4f1e8"/><path d="M6 12 L9 6 L18 7.6 L15 14Z" fill="#6fae5d"/><path d="M15 4 L19 2 L17 7Z" fill="#e39a3c"/><path d="M23 9 Q23 2.4 28.6 2.4 Q34 2.4 34 9 V15 Q28.6 18 23 15Z" fill="#1f7ee8"/><ellipse cx="28.6" cy="4.8" rx="3.2" ry="2" fill="#69b3ff"/></svg>
<svg class="abs" style="left:752.5px;top:9.0px" width="20" height="20" viewBox="0 0 20 20"><rect x="5.6" y="1.6" width="13" height="11.4" rx="1" fill="#f2f2f2"/><rect x="1" y="6.4" width="12.6" height="11.4" rx="1" fill="#8a8a8a" stroke="#1c1c1c" stroke-width="0.5"/></svg>
<svg class="abs" style="left:787.5px;top:9.0px" width="20" height="20" viewBox="0 0 20 20"><circle cx="14.4" cy="4.4" r="2.6" fill="#7b83eb"/><circle cx="18" cy="5.4" r="1.6" fill="#5059c9"/><path d="M9 7.4 H17.6 Q18.6 7.4 18.6 8.4 V13.6 Q18.6 18 13.8 18 Q9 18 9 13.6Z" fill="#7b83eb"/><path d="M16 8 H19.4 Q20 8 20 8.8 V12.6 Q20 15.4 17.4 15.4 H16Z" fill="#5059c9"/><rect x="0.8" y="4.4" width="11.6" height="11.6" rx="1" fill="#f4f4fb"/><path d="M4 7.4 H9.4 V9 H7.6 V13.4 H5.8 V9 H4Z" fill="#4b53bc"/></svg>
<svg class="abs" style="left:823.0px;top:9.0px" width="20" height="20" viewBox="0 0 20 20"><rect x="0.6" y="0.6" width="18.8" height="18.8" rx="1.2" fill="#1787d4"/><rect x="4" y="6" width="12" height="8.6" rx="1" fill="none" stroke="#bfe3fa" stroke-width="1.1"/><path d="M7.4 6 V4.2 H12.6 V6" fill="none" stroke="#bfe3fa" stroke-width="1.1"/><rect x="11.4" y="9" width="6.4" height="8.6" rx="1" fill="#1787d4" stroke="#bfe3fa" stroke-width="1.1"/><rect x="6" y="10" width="3.6" height="3" fill="none" stroke="#bfe3fa" stroke-width="0.9"/></svg>
<svg class="abs" style="left:858.0px;top:9.0px" width="20" height="20" viewBox="0 0 20 20"><path d="M1.4 6 H8.4 V14 H5 V9.2 H1.4Z" fill="#fff"/><circle cx="11" cy="7.6" r="1.7" fill="#fff"/><path d="M13.4 6 H19 L15.6 14 H11.6 L13.6 9.2Z" fill="#fff"/></svg>
<svg class="abs" style="left:893.0px;top:9.0px" width="20" height="20" viewBox="0 0 20 20"><path d="M1 3.2 Q1 2.2 2 2.2 H7 L8.6 4 H18 Q19 4 19 5 V8 H1Z" fill="#e8a71f"/><rect x="1" y="5.4" width="18" height="11.4" rx="1" fill="#ffcf48"/><rect x="1" y="13" width="18" height="3.8" rx="0.8" fill="#f0b429"/><rect x="6.4" y="12.6" width="7.2" height="4.2" fill="#3a90e0"/></svg>
<svg class="abs" style="left:928.7px;top:9.0px" width="20" height="20" viewBox="0 0 20 20"><defs><linearGradient id="eg" x1="0" y1="0" x2="1" y2="1"><stop offset="0" stop-color="#35c1f1"/><stop offset="1" stop-color="#0c59a4"/></linearGradient></defs><circle cx="10" cy="10" r="9.2" fill="url(#eg)"/><path d="M1.2 8.6 Q3 1.4 10.4 1 Q17.6 1.4 18.8 7.2 Q15 4 10.6 5.4 Q6.4 7 6.2 11.4 Q3 12 1.2 8.6Z" fill="#4fd4a8"/><path d="M7.6 9.4 Q8.8 6.4 12.4 7 Q15.2 8 14.6 10.4 Q14 12 11.4 11.6 Q13 15.4 17.2 13.8 Q15 17.8 11 17.6 Q6.4 16.4 7.6 9.4Z" fill="#1c1c1c" opacity="0.55"/></svg>
<svg class="abs" style="left:963.7px;top:9.0px" width="20" height="20" viewBox="0 0 20 20"><path d="M6.4 5.4 V4 Q6.4 1.6 10 1.6 Q13.6 1.6 13.6 4 V5.4" fill="none" stroke="#e9e9e9" stroke-width="1.3"/><path d="M1.4 5.4 H18.6 V16.4 Q18.6 18.4 16.6 18.4 H3.4 Q1.4 18.4 1.4 16.4Z" fill="#f3f3f3"/><rect x="6.2" y="8" width="3.3" height="3.3" fill="#f25022"/><rect x="10.5" y="8" width="3.3" height="3.3" fill="#7fba00"/><rect x="6.2" y="12.3" width="3.3" height="3.3" fill="#00a4ef"/><rect x="10.5" y="12.3" width="3.3" height="3.3" fill="#ffb900"/></svg>
<svg class="abs" style="left:999.0px;top:9.0px" width="20" height="20" viewBox="0 0 20 20"><path d="M1 7.6 L10 1.6 L19 7.6 V17 Q19 18 18 18 H2 Q1 18 1 17Z" fill="#1a73c9"/><path d="M3 5 H17 V13 H3Z" fill="#e8f3fc"/><path d="M1 7.6 L10 13.4 L19 7.6 V17 Q19 18 18 18 H2 Q1 18 1 17Z" fill="#3aa0ee"/><path d="M1 17.4 L10 11.6 L19 17.4 Q18.8 18 18 18 H2 Q1.2 18 1 17.4Z" fill="#62b8f6"/></svg>
<svg class="abs" style="left:1034.5px;top:9.0px" width="20" height="20" viewBox="0 0 20 20"><rect x="0.4" y="0.4" width="19.2" height="19.2" fill="#1a2fa0"/><path d="M7 4.6 H9.2 V13.2 H14 V15.2 H7Z" fill="#fff"/></svg>
<svg class="abs" style="left:1070.0px;top:9.0px" width="20" height="20" viewBox="0 0 20 20"><path d="M1.6 18.4 L2.8 14 Q1.4 11.8 1.6 9.2 Q2.4 2.6 9.6 2 Q17.4 2.4 17.8 10 Q17.4 17.4 9.8 17.8 Q7.6 17.8 5.8 16.8Z" fill="#2bd366"/><path d="M6.6 6.2 Q7.6 5.4 8.2 7 Q8.8 8.4 8 9 Q9.4 11.4 11.6 12 Q12.6 10.8 13.6 11.6 Q15.2 12.4 14.2 13.6 Q12.6 15 9.8 13.4 Q6.4 11.2 6 8 Q5.9 6.8 6.6 6.2Z" fill="#fff"/></svg>
<div class="abs" style="left:1080.5px;top:5px;width:12.5px;height:12.5px;border-radius:50%;background:#d49be0;color:#3a2040;font-size:8.4px;text-align:center;line-height:12.5px">1</div>
<svg class="abs" style="left:1104.5px;top:9.0px" width="20" height="20" viewBox="0 0 20 20"><circle cx="10" cy="10" r="9" fill="#2aa3e0"/><path d="M4.2 9.8 L15 5.4 L13.2 14.8 L9.6 12.2 L8 13.8 L7.8 11.2 L12.6 7.2 L6.8 10.8Z" fill="#fff"/></svg>
<svg class="abs" style="left:1140.0px;top:9.0px" width="20" height="20" viewBox="0 0 20 20"><circle cx="10" cy="10" r="9.4" fill="#5865f2"/><path d="M5.2 6.6 Q7 5.6 8.4 5.6 L8.8 6.4 H11.2 L11.6 5.6 Q13 5.6 14.8 6.6 Q16.4 9.8 16 13.2 Q14.4 14.4 12.8 14.6 L12.2 13.6 Q9.8 14.2 7.8 13.6 L7.2 14.6 Q5.6 14.4 4 13.2 Q3.6 9.8 5.2 6.6Z" fill="#fff"/><ellipse cx="7.8" cy="10.4" rx="1.2" ry="1.4" fill="#5865f2"/><ellipse cx="12.2" cy="10.4" rx="1.2" ry="1.4" fill="#5865f2"/></svg>
<svg class="abs" style="left:1175.0px;top:9.0px" width="20" height="20" viewBox="0 0 20 20"><circle cx="10" cy="10" r="8" fill="#1aa6e6"/><circle cx="5.6" cy="5.6" r="4.4" fill="#1aa6e6"/><circle cx="14.4" cy="14.4" r="4.4" fill="#1aa6e6"/><text x="10" y="14.4" font-size="12.5" font-weight="bold" text-anchor="middle" fill="#fff" font-family="Liberation Sans">S</text></svg>
<svg class="abs" style="left:1210.5px;top:9.0px" width="20" height="20" viewBox="0 0 20 20"><circle cx="10" cy="10" r="9.4" fill="#f4f1ee"/><g stroke-width="2.3" stroke-linecap="round"><path d="M8.2 4.6 V8.2 H4.8" stroke="#36c5f0" fill="none"/><path d="M15.4 8.2 H11.8 V4.8" stroke="#2eb67d" fill="none"/><path d="M11.8 15.4 V11.8 H15.2" stroke="#ecb22e" fill="none"/><path d="M4.6 11.8 H8.2 V15.2" stroke="#e01e5a" fill="none"/></g></svg>
<svg class="abs" style="left:1245.0px;top:9.0px" width="20" height="20" viewBox="0 0 20 20"><rect x="6" y="1.6" width="13" height="16.8" rx="1" fill="#c45fe0"/><rect x="14.6" y="1.6" width="4.4" height="5.6" fill="#d98bf0"/><rect x="14.6" y="7.2" width="4.4" height="5.6" fill="#b03fd0"/><rect x="14.6" y="12.8" width="4.4" height="5.6" fill="#8a22b0"/><rect x="0.8" y="4.6" width="11.4" height="11.4" rx="1" fill="#7719aa"/><path d="M4 13 V7.4 H5.6 L8 11 V7.4 H9.4 V13 H8 L5.4 9.2 V13Z" fill="#fff"/></svg>
<svg class="abs" style="left:1280.5px;top:9.0px" width="20" height="20" viewBox="0 0 20 20"><circle cx="10" cy="10" r="9.6" fill="#dedede"/><rect x="3.6" y="5" width="12.8" height="9" rx="0.8" fill="#e63a70"/><path d="M7 16 H13" stroke="#555" stroke-width="1.4"/><rect x="10" y="7" width="5" height="5.4" fill="#f4a6bf"/><path d="M11.4 8 L14 9.8 L11.4 11.6Z" fill="#fff"/></svg>
<svg class="abs" style="left:1316.0px;top:9.0px" width="20" height="20" viewBox="0 0 20 20"><path d="M5.6 2 H14.4 L15.6 3.6 L17.4 3.4 L18 6 L17.4 7.6 L17.8 9 L15 16 L10 19.2 L5 16 L2.2 9 L2.6 7.6 L2 6 L2.6 3.4 L4.4 3.6Z" fill="#fb542b"/><path d="M10 5.4 L12.4 5 L14.2 7 L13.6 8.6 L14.2 10 L11.6 12 L12 13.6 L10 15 L8 13.6 L8.4 12 L5.8 10 L6.4 8.6 L5.8 7 L7.6 5Z" fill="#fff"/><path d="M10 7 L11.4 9 L10 10.4 L8.6 9Z" fill="#fb542b"/></svg>
<svg class="abs" style="left:1351.0px;top:9.0px" width="20" height="20" viewBox="0 0 20 20"><circle cx="10" cy="10" r="9.2" fill="#ea4335"/><path d="M10 10 L2.04 5.4 A9.2 9.2 0 0 0 10 19.2 L14 12.3Z" fill="#34a853"/><path d="M10 10 L14 12.3 L10 19.2 A9.2 9.2 0 0 0 17.96 5.4 H10Z" fill="#fbbc05"/><circle cx="10" cy="10" r="4.3" fill="#fff"/><circle cx="10" cy="10" r="3.4" fill="#4285f4"/></svg>
<svg class="abs" style="left:1386.0px;top:9.0px" width="20" height="20" viewBox="0 0 20 20"><defs><linearGradient id="cg" x1="0" y1="0" x2="1" y2="1"><stop offset="0" stop-color="#00c4cc"/><stop offset="1" stop-color="#7d2ae8"/></linearGradient></defs><circle cx="10" cy="10" r="9.4" fill="url(#cg)"/><path d="M13.4 7.4 Q13 5 10.6 5 Q7 5.4 6.4 10.2 Q6.4 14.8 9.6 15 Q12.4 14.8 13.8 12" fill="none" stroke="#fff" stroke-width="1.5" stroke-linecap="round"/></svg>
<svg class="abs" style="left:1422.0px;top:9.0px" width="20" height="20" viewBox="0 0 20 20"><defs><linearGradient id="bg2" x1="0" y1="0" x2="0" y2="1"><stop offset="0" stop-color="#49a0f8"/><stop offset="1" stop-color="#1f6fe0"/></linearGradient></defs><rect x="1.4" y="2.4" width="17.2" height="15.6" rx="2.4" fill="url(#bg2)"/><path d="M6.8 11.4 L8.8 13.4 L12.6 9.4" fill="none" stroke="#fff" stroke-width="1.3"/></svg>
<svg class="abs" style="left:1457.5px;top:9.0px" width="20" height="20" viewBox="0 0 20 20"><path d="M10 1.6 L17 5.4 V14.6 L10 18.4 L3 14.6 V5.4Z" fill="none" stroke="#e0201c" stroke-width="1.7"/><path d="M6.4 7.4 H13 M6.4 12.6 H13 M6.4 7.4 V12.6" stroke="#e0201c" stroke-width="1.7" fill="none"/><path d="M12 10 L17.6 7.4 V12.6Z" fill="#2fae4a"/></svg>
<svg class="abs" style="left:1490.0px;top:8.0px" width="22" height="22" viewBox="0 0 22 22"><rect x="2.4" y="1.6" width="12" height="13.4" rx="0.8" fill="#f0ece8" stroke="#c8c2bc" stroke-width="0.6"/><rect x="4.4" y="3.6" width="7.4" height="8" fill="none" stroke="#e0522a" stroke-width="1.5" stroke-dasharray="2.4 1.4"/><path d="M11.6 10 V18 M11.6 15 L17.6 12 M9 18.6 H14.4" stroke="#5aa9e0" stroke-width="1.3" fill="none"/><circle cx="18" cy="11.6" r="1.4" fill="none" stroke="#5aa9e0" stroke-width="1"/></svg>
<div class="abs" style="left:900.8px;top:32.4px;width:5px;height:1.8px;border-radius:1px;background:#8a8a8a"></div>
<div class="abs" style="left:1077.8px;top:32.4px;width:5px;height:1.8px;border-radius:1px;background:#8a8a8a"></div>
<div class="abs" style="left:1218.3px;top:32.4px;width:5px;height:1.8px;border-radius:1px;background:#8a8a8a"></div>
<div class="abs" style="left:1288.3px;top:32.4px;width:5px;height:1.8px;border-radius:1px;background:#8a8a8a"></div>
<div class="abs" style="left:1323.8px;top:32.4px;width:5px;height:1.8px;border-radius:1px;background:#8a8a8a"></div>
<div class="abs" style="left:1358.8px;top:32.4px;width:5px;height:1.8px;border-radius:1px;background:#8a8a8a"></div>
<div class="abs" style="left:1495px;top:32.6px;width:12px;height:1.8px;border-radius:1px;background:#5aa9e0"></div>
<svg class="abs" style="left:1818.5px;top:15.5px" width="10" height="6" viewBox="0 0 10 6"><path d="M0.8 5.2 L5 1 L9.2 5.2" fill="none" stroke="#e8e8e8" stroke-width="1.2"/></svg>
<svg class="abs" style="left:1842.5px;top:13.2px" width="13" height="12" viewBox="0 0 13 12"><path d="M3.4 0.6 L6.5 2.6 L3.4 4.6 L0.4 2.6Z M9.6 0.6 L12.6 2.6 L9.6 4.6 L6.5 2.6Z M3.4 4.6 L6.5 6.6 L3.4 8.6 L0.4 6.6Z M9.6 4.6 L12.6 6.6 L9.6 8.6 L6.5 6.6Z M6.5 7.4 L9.4 9.2 L6.5 11.2 L3.6 9.2Z" fill="#f0f0f0"/></svg>
<div class="abs" style="left:1865px;top:7.5px;width:30px;text-align:center;font-size:9.3px;line-height:12.9px;color:#f0f0f0;letter-spacing:-0.52px;white-space:nowrap">ENG<br>US</div>
<svg class="abs" style="left:1902.5px;top:12.5px" width="14" height="14" viewBox="0 0 14 14"><rect x="0.6" y="1.6" width="10" height="8" rx="0.6" fill="none" stroke="#f0f0f0" stroke-width="1.1"/><path d="M3 12.4 H8.4 M5.6 9.8 V12.4" stroke="#f0f0f0" stroke-width="1.1"/><rect x="9.6" y="0.6" width="3.6" height="4.4" fill="#1c1c1c" stroke="#f0f0f0" stroke-width="0.9"/><path d="M11.4 5 V12.6" stroke="#f0f0f0" stroke-width="0.9"/></svg>
<svg class="abs" style="left:1922px;top:13px" width="13" height="13" viewBox="0 0 13 13"><path d="M0.8 4.6 H3 L6 1.8 V11.2 L3 8.4 H0.8Z" fill="none" stroke="#f0f0f0" stroke-width="1"/><path d="M8 4.6 Q9.2 6.5 8 8.4" fill="none" stroke="#c0c0c0" stroke-width="0.9"/><path d="M9.8 3 Q12 6.5 9.8 10" fill="none" stroke="#6a6a6a" stroke-width="0.9"/></svg>
<svg class="abs" style="left:1941px;top:13px" width="14" height="12" viewBox="0 0 14 12"><rect x="1.4" y="3.2" width="10.4" height="6.4" rx="1.2" fill="none" stroke="#f0f0f0" stroke-width="1"/><rect x="2.8" y="4.6" width="6" height="3.6" fill="#f0f0f0"/><path d="M12.6 5.2 V7.6" stroke="#f0f0f0" stroke-width="1.2"/><path d="M1.4 0.8 V4.4 M0 1.8 H3.6" stroke="#f0f0f0" stroke-width="0.9"/></svg>
<div class="abs" style="right:33.5px;top:6.1px;text-align:right;font-size:9.4px;line-height:13px;color:#f0f0f0;letter-spacing:-0.07px;white-space:nowrap">14:48<br>08.02.2024</div>
<svg class="abs" style="left:2019.5px;top:12.2px" width="13" height="14" viewBox="0 0 13 14"><path d="M6.5 1 Q2.6 1.4 2.6 6 Q2.6 9 1 10.8 H12 Q10.4 9 10.4 6 Q10.4 1.4 6.5 1Z" fill="#e6b6ef"/><path d="M5 12 Q6.5 13.6 8 12Z" fill="#e6b6ef"/></svg>
</div>

</body></html>
